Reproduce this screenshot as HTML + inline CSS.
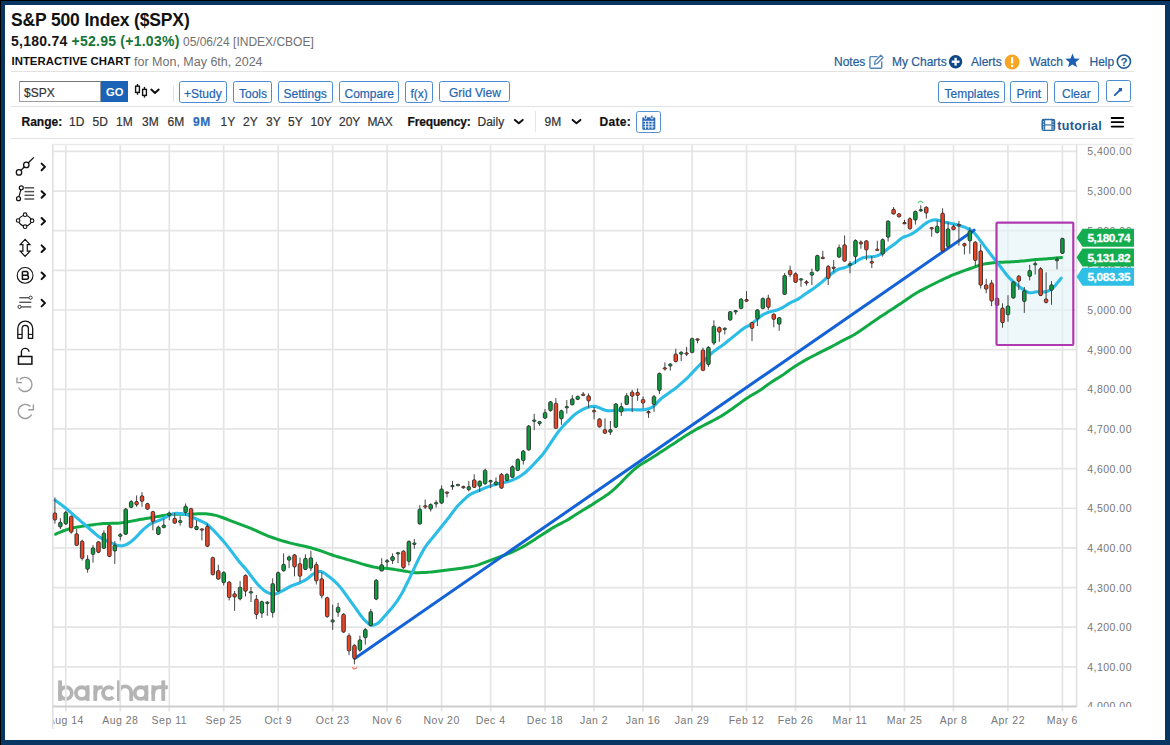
<!DOCTYPE html>
<html><head><meta charset="utf-8">
<style>
*{margin:0;padding:0;box-sizing:border-box}
html,body{width:1170px;height:745px;overflow:hidden;background:#fff}
body{font-family:"Liberation Sans",sans-serif;position:relative}
.a{position:absolute;white-space:nowrap}
.t12,.bt{-webkit-text-stroke:0.2px currentColor}
.t12{font-size:12px;line-height:14px}
.hr{position:absolute;height:1.4px;background:#e2e2e2}
.lnk{color:#1f5c99;top:55px}
.btn{position:absolute;top:81px;height:21.5px;border:1.6px solid #4d8cd4;border-radius:2.5px}
.bt{position:absolute;top:87px;font-size:12px;line-height:14px;color:#1f64b2;white-space:nowrap}
.rng{top:115.3px;color:#333}
.rb{font-weight:bold;color:#111}
.ax{font-family:"Liberation Sans",sans-serif;font-size:10.5px;fill:#777;letter-spacing:0.5px}
.axd{font-family:"Liberation Sans",sans-serif;font-size:10.5px;fill:#777;letter-spacing:0.5px}
.wm{font-family:"Liberation Sans",sans-serif;font-size:27px;font-weight:bold;fill:#b8b8b8;letter-spacing:0.73px}
.tag{font-family:"Liberation Sans",sans-serif;font-size:11.8px;font-weight:bold;fill:#fff;stroke:#fff;stroke-width:0.3px;letter-spacing:-0.4px}
svg.chart{position:absolute;left:0;top:0}
</style></head><body>
<svg class="chart" width="1170" height="745" viewBox="0 0 1170 745">
<rect x="52.8" y="144.6" width="1023.8" height="561.9" fill="#fff"/>
<g fill="#b4b4b4"><rect x="58.1" y="680.4" width="3.9" height="20.5"/><circle cx="65.9" cy="693.1" r="5.85" fill="none" stroke="#b4b4b4" stroke-width="3.8"/><circle cx="81.8" cy="693.1" r="5.85" fill="none" stroke="#b4b4b4" stroke-width="3.8"/><rect x="85.7" y="685.3" width="3.8" height="15.6"/><rect x="93.4" y="685.3" width="3.8" height="15.6"/><path d="M95.3,694 Q95.3,687.2 102.6,687.2" fill="none" stroke="#b4b4b4" stroke-width="3.8"/><path d="M113.2,689.2 A5.85,5.85 0 1 0 113.2,697" fill="none" stroke="#b4b4b4" stroke-width="3.8"/><rect x="117.1" y="680.4" width="3.8" height="20.5"/><path d="M119,700.9 L119,692.5 A6.1,6.1 0 0 1 131.2,692.5 L131.2,700.9" fill="none" stroke="#b4b4b4" stroke-width="3.8"/><circle cx="140.6" cy="693.1" r="5.85" fill="none" stroke="#b4b4b4" stroke-width="3.8"/><rect x="144.5" y="685.3" width="3.8" height="15.6"/><rect x="151.4" y="685.3" width="3.7" height="15.6"/><path d="M153.2,694 Q153.2,687.2 159.9,687.2" fill="none" stroke="#b4b4b4" stroke-width="3.8"/><rect x="161.3" y="680.4" width="3.9" height="20.5"/><rect x="159.6" y="685.3" width="8.2" height="3.9"/></g>
<line x1="52.8" y1="666.85" x2="1076.6" y2="666.85" stroke="#e5e5e5" stroke-width="1.7"/>
<line x1="52.8" y1="627.20" x2="1076.6" y2="627.20" stroke="#e5e5e5" stroke-width="1.7"/>
<line x1="52.8" y1="587.55" x2="1076.6" y2="587.55" stroke="#e5e5e5" stroke-width="1.7"/>
<line x1="52.8" y1="547.90" x2="1076.6" y2="547.90" stroke="#e5e5e5" stroke-width="1.7"/>
<line x1="52.8" y1="508.25" x2="1076.6" y2="508.25" stroke="#e5e5e5" stroke-width="1.7"/>
<line x1="52.8" y1="468.60" x2="1076.6" y2="468.60" stroke="#e5e5e5" stroke-width="1.7"/>
<line x1="52.8" y1="428.95" x2="1076.6" y2="428.95" stroke="#e5e5e5" stroke-width="1.7"/>
<line x1="52.8" y1="389.30" x2="1076.6" y2="389.30" stroke="#e5e5e5" stroke-width="1.7"/>
<line x1="52.8" y1="349.65" x2="1076.6" y2="349.65" stroke="#e5e5e5" stroke-width="1.7"/>
<line x1="52.8" y1="310.00" x2="1076.6" y2="310.00" stroke="#e5e5e5" stroke-width="1.7"/>
<line x1="52.8" y1="270.35" x2="1076.6" y2="270.35" stroke="#e5e5e5" stroke-width="1.7"/>
<line x1="52.8" y1="230.70" x2="1076.6" y2="230.70" stroke="#e5e5e5" stroke-width="1.7"/>
<line x1="52.8" y1="191.05" x2="1076.6" y2="191.05" stroke="#e5e5e5" stroke-width="1.7"/>
<line x1="52.8" y1="151.40" x2="1076.6" y2="151.40" stroke="#e5e5e5" stroke-width="1.7"/>
<line x1="65.80" y1="144.6" x2="65.80" y2="711.5" stroke="#e5e5e5" stroke-width="1.7"/>
<line x1="120.26" y1="144.6" x2="120.26" y2="711.5" stroke="#e5e5e5" stroke-width="1.7"/>
<line x1="169.27" y1="144.6" x2="169.27" y2="711.5" stroke="#e5e5e5" stroke-width="1.7"/>
<line x1="223.73" y1="144.6" x2="223.73" y2="711.5" stroke="#e5e5e5" stroke-width="1.7"/>
<line x1="278.19" y1="144.6" x2="278.19" y2="711.5" stroke="#e5e5e5" stroke-width="1.7"/>
<line x1="332.65" y1="144.6" x2="332.65" y2="711.5" stroke="#e5e5e5" stroke-width="1.7"/>
<line x1="387.11" y1="144.6" x2="387.11" y2="711.5" stroke="#e5e5e5" stroke-width="1.7"/>
<line x1="441.57" y1="144.6" x2="441.57" y2="711.5" stroke="#e5e5e5" stroke-width="1.7"/>
<line x1="490.59" y1="144.6" x2="490.59" y2="711.5" stroke="#e5e5e5" stroke-width="1.7"/>
<line x1="545.05" y1="144.6" x2="545.05" y2="711.5" stroke="#e5e5e5" stroke-width="1.7"/>
<line x1="594.06" y1="144.6" x2="594.06" y2="711.5" stroke="#e5e5e5" stroke-width="1.7"/>
<line x1="643.08" y1="144.6" x2="643.08" y2="711.5" stroke="#e5e5e5" stroke-width="1.7"/>
<line x1="692.09" y1="144.6" x2="692.09" y2="711.5" stroke="#e5e5e5" stroke-width="1.7"/>
<line x1="746.55" y1="144.6" x2="746.55" y2="711.5" stroke="#e5e5e5" stroke-width="1.7"/>
<line x1="795.56" y1="144.6" x2="795.56" y2="711.5" stroke="#e5e5e5" stroke-width="1.7"/>
<line x1="850.02" y1="144.6" x2="850.02" y2="711.5" stroke="#e5e5e5" stroke-width="1.7"/>
<line x1="904.48" y1="144.6" x2="904.48" y2="711.5" stroke="#e5e5e5" stroke-width="1.7"/>
<line x1="953.50" y1="144.6" x2="953.50" y2="711.5" stroke="#e5e5e5" stroke-width="1.7"/>
<line x1="1007.96" y1="144.6" x2="1007.96" y2="711.5" stroke="#e5e5e5" stroke-width="1.7"/>
<line x1="1062.42" y1="144.6" x2="1062.42" y2="711.5" stroke="#e5e5e5" stroke-width="1.7"/>
<line x1="52.8" y1="144.6" x2="1133" y2="144.6" stroke="#ebebeb" stroke-width="1.5"/>
<line x1="52.8" y1="144.6" x2="52.8" y2="729" stroke="#e0e0e0" stroke-width="1.6"/>
<line x1="1076.6" y1="144.6" x2="1076.6" y2="706.5" stroke="#e0e0e0" stroke-width="1.6"/>
<line x1="52.8" y1="706.5" x2="1076.6" y2="706.5" stroke="#cecece" stroke-width="1.8"/>
<clipPath id="yclip"><rect x="1077" y="140" width="90" height="567"/></clipPath><g clip-path="url(#yclip)">
<text x="1132" y="710.4" text-anchor="end" class="ax">4,000.00</text>
<text x="1132" y="670.8" text-anchor="end" class="ax">4,100.00</text>
<text x="1132" y="631.1" text-anchor="end" class="ax">4,200.00</text>
<text x="1132" y="591.5" text-anchor="end" class="ax">4,300.00</text>
<text x="1132" y="551.8" text-anchor="end" class="ax">4,400.00</text>
<text x="1132" y="512.1" text-anchor="end" class="ax">4,500.00</text>
<text x="1132" y="472.5" text-anchor="end" class="ax">4,600.00</text>
<text x="1132" y="432.9" text-anchor="end" class="ax">4,700.00</text>
<text x="1132" y="393.2" text-anchor="end" class="ax">4,800.00</text>
<text x="1132" y="353.5" text-anchor="end" class="ax">4,900.00</text>
<text x="1132" y="313.9" text-anchor="end" class="ax">5,000.00</text>
<text x="1132" y="274.2" text-anchor="end" class="ax">5,100.00</text>
<text x="1132" y="234.6" text-anchor="end" class="ax">5,200.00</text>
<text x="1132" y="195.0" text-anchor="end" class="ax">5,300.00</text>
<text x="1132" y="155.3" text-anchor="end" class="ax">5,400.00</text>
</g>
<clipPath id="dclip"><rect x="53.6" y="706" width="1100" height="30"/></clipPath><g clip-path="url(#dclip)">
<text x="65.8" y="724" text-anchor="middle" class="axd">Aug 14</text>
<text x="120.3" y="724" text-anchor="middle" class="axd">Aug 28</text>
<text x="169.3" y="724" text-anchor="middle" class="axd">Sep 11</text>
<text x="223.7" y="724" text-anchor="middle" class="axd">Sep 25</text>
<text x="278.2" y="724" text-anchor="middle" class="axd">Oct 9</text>
<text x="332.7" y="724" text-anchor="middle" class="axd">Oct 23</text>
<text x="387.1" y="724" text-anchor="middle" class="axd">Nov 6</text>
<text x="441.6" y="724" text-anchor="middle" class="axd">Nov 20</text>
<text x="490.6" y="724" text-anchor="middle" class="axd">Dec 4</text>
<text x="545.0" y="724" text-anchor="middle" class="axd">Dec 18</text>
<text x="594.1" y="724" text-anchor="middle" class="axd">Jan 2</text>
<text x="643.1" y="724" text-anchor="middle" class="axd">Jan 16</text>
<text x="692.1" y="724" text-anchor="middle" class="axd">Jan 29</text>
<text x="746.5" y="724" text-anchor="middle" class="axd">Feb 12</text>
<text x="795.6" y="724" text-anchor="middle" class="axd">Feb 26</text>
<text x="850.0" y="724" text-anchor="middle" class="axd">Mar 11</text>
<text x="904.5" y="724" text-anchor="middle" class="axd">Mar 25</text>
<text x="953.5" y="724" text-anchor="middle" class="axd">Apr 8</text>
<text x="1008.0" y="724" text-anchor="middle" class="axd">Apr 22</text>
<text x="1062.4" y="724" text-anchor="middle" class="axd">May 6</text>
</g>
<rect x="996.5" y="222.6" width="76.8" height="122.4" fill="#e3f3f8" fill-opacity="0.62" rx="1"/>
<path d="M55.6,534.20 L57.6,533.12 L59.6,532.38 L61.6,531.56 L63.6,530.77 L65.6,530.04 L67.6,529.39 L69.6,528.78 L71.6,528.23 L73.6,527.75 L75.6,527.35 L77.6,527.00 L79.6,526.69 L81.6,526.39 L83.6,526.10 L85.6,525.80 L87.6,525.50 L89.6,525.21 L91.6,524.92 L93.6,524.65 L95.6,524.38 L97.6,524.13 L99.6,523.91 L101.6,523.73 L103.6,523.61 L105.6,523.53 L107.6,523.47 L109.6,523.43 L111.6,523.37 L113.6,523.32 L115.6,523.25 L117.6,523.15 L119.6,523.02 L121.6,522.81 L123.6,522.54 L125.6,522.22 L127.6,521.88 L129.6,521.52 L131.6,521.14 L133.6,520.75 L135.6,520.35 L137.6,519.96 L139.6,519.59 L141.6,519.24 L143.6,518.90 L145.6,518.56 L147.6,518.23 L149.6,517.90 L151.6,517.57 L153.6,517.23 L155.6,516.88 L157.6,516.52 L159.6,516.15 L161.6,515.78 L163.6,515.44 L165.6,515.14 L167.6,514.88 L169.6,514.67 L171.6,514.48 L173.6,514.33 L175.6,514.24 L177.6,514.22 L179.6,514.24 L181.6,514.28 L183.6,514.31 L185.6,514.30 L187.6,514.26 L189.6,514.18 L191.6,514.09 L193.6,514.00 L195.6,513.91 L197.6,513.84 L199.6,513.78 L201.6,513.74 L203.6,513.74 L205.6,513.82 L207.6,513.99 L209.6,514.24 L211.6,514.55 L213.6,514.91 L215.6,515.37 L217.6,515.93 L219.6,516.58 L221.6,517.28 L223.6,518.00 L225.6,518.75 L227.6,519.52 L229.6,520.30 L231.6,521.10 L233.6,521.89 L235.6,522.66 L237.6,523.41 L239.6,524.15 L241.6,524.88 L243.6,525.61 L245.6,526.35 L247.6,527.09 L249.6,527.87 L251.6,528.69 L253.6,529.56 L255.6,530.46 L257.6,531.37 L259.6,532.29 L261.6,533.20 L263.6,534.10 L265.6,534.97 L267.6,535.78 L269.6,536.54 L271.6,537.26 L273.6,537.97 L275.6,538.66 L277.6,539.34 L279.6,539.99 L281.6,540.61 L283.6,541.20 L285.6,541.76 L287.6,542.31 L289.6,542.86 L291.6,543.39 L293.6,543.89 L295.6,544.35 L297.6,544.78 L299.6,545.19 L301.6,545.60 L303.6,546.01 L305.6,546.46 L307.6,546.94 L309.6,547.48 L311.6,548.05 L313.6,548.64 L315.6,549.24 L317.6,549.85 L319.6,550.49 L321.6,551.16 L323.6,551.87 L325.6,552.59 L327.6,553.33 L329.6,554.06 L331.6,554.78 L333.6,555.47 L335.6,556.11 L337.6,556.71 L339.6,557.29 L341.6,557.86 L343.6,558.43 L345.6,559.00 L347.6,559.57 L349.6,560.14 L351.6,560.73 L353.6,561.33 L355.6,561.94 L357.6,562.57 L359.6,563.19 L361.6,563.81 L363.6,564.40 L365.6,564.96 L367.6,565.49 L369.6,565.99 L371.6,566.47 L373.6,566.94 L375.6,567.35 L377.6,567.67 L379.6,567.91 L381.6,568.08 L383.6,568.23 L385.6,568.37 L387.6,568.53 L389.6,568.74 L391.6,568.99 L393.6,569.29 L395.6,569.61 L397.6,569.93 L399.6,570.26 L401.6,570.60 L403.6,570.94 L405.6,571.29 L407.6,571.64 L409.6,571.99 L411.6,572.29 L413.6,572.52 L415.6,572.64 L417.6,572.68 L419.6,572.66 L421.6,572.61 L423.6,572.54 L425.6,572.45 L427.6,572.31 L429.6,572.13 L431.6,571.93 L433.6,571.72 L435.6,571.50 L437.6,571.28 L439.6,571.05 L441.6,570.81 L443.6,570.55 L445.6,570.29 L447.6,570.02 L449.6,569.75 L451.6,569.49 L453.6,569.23 L455.6,568.97 L457.6,568.72 L459.6,568.46 L461.6,568.19 L463.6,567.90 L465.6,567.59 L467.6,567.26 L469.6,566.91 L471.6,566.54 L473.6,566.12 L475.6,565.63 L477.6,565.07 L479.6,564.42 L481.6,563.71 L483.6,562.96 L485.6,562.18 L487.6,561.40 L489.6,560.62 L491.6,559.87 L493.6,559.14 L495.6,558.42 L497.6,557.71 L499.6,557.00 L501.6,556.27 L503.6,555.52 L505.6,554.74 L507.6,553.95 L509.6,553.15 L511.6,552.32 L513.6,551.44 L515.6,550.50 L517.6,549.52 L519.6,548.51 L521.6,547.47 L523.6,546.39 L525.6,545.23 L527.6,544.01 L529.6,542.75 L531.6,541.47 L533.6,540.18 L535.6,538.89 L537.6,537.60 L539.6,536.30 L541.6,535.01 L543.6,533.71 L545.6,532.42 L547.6,531.13 L549.6,529.86 L551.6,528.60 L553.6,527.38 L555.6,526.22 L557.6,525.13 L559.6,524.09 L561.6,523.07 L563.6,522.04 L565.6,520.97 L567.6,519.84 L569.6,518.64 L571.6,517.39 L573.6,516.11 L575.6,514.83 L577.6,513.55 L579.6,512.29 L581.6,511.05 L583.6,509.83 L585.6,508.61 L587.6,507.38 L589.6,506.15 L591.6,504.91 L593.6,503.64 L595.6,502.36 L597.6,501.07 L599.6,499.78 L601.6,498.49 L603.6,497.19 L605.6,495.87 L607.6,494.50 L609.6,493.04 L611.6,491.44 L613.6,489.70 L615.6,487.86 L617.6,485.93 L619.6,483.94 L621.6,481.88 L623.6,479.78 L625.6,477.70 L627.6,475.67 L629.6,473.71 L631.6,471.82 L633.6,470.00 L635.6,468.28 L637.6,466.71 L639.6,465.32 L641.6,464.05 L643.6,462.84 L645.6,461.64 L647.6,460.43 L649.6,459.20 L651.6,457.97 L653.6,456.72 L655.6,455.45 L657.6,454.16 L659.6,452.86 L661.6,451.54 L663.6,450.22 L665.6,448.91 L667.6,447.60 L669.6,446.30 L671.6,445.00 L673.6,443.69 L675.6,442.38 L677.6,441.05 L679.6,439.72 L681.6,438.38 L683.6,437.06 L685.6,435.76 L687.6,434.50 L689.6,433.28 L691.6,432.10 L693.6,430.94 L695.6,429.79 L697.6,428.66 L699.6,427.57 L701.6,426.50 L703.6,425.47 L705.6,424.45 L707.6,423.42 L709.6,422.39 L711.6,421.34 L713.6,420.28 L715.6,419.20 L717.6,418.10 L719.6,416.99 L721.6,415.85 L723.6,414.63 L725.6,413.33 L727.6,411.97 L729.6,410.57 L731.6,409.16 L733.6,407.74 L735.6,406.31 L737.6,404.85 L739.6,403.37 L741.6,401.89 L743.6,400.42 L745.6,399.00 L747.6,397.65 L749.6,396.41 L751.6,395.25 L753.6,394.12 L755.6,392.99 L757.6,391.83 L759.6,390.57 L761.6,389.21 L763.6,387.77 L765.6,386.29 L767.6,384.80 L769.6,383.34 L771.6,381.94 L773.6,380.63 L775.6,379.38 L777.6,378.16 L779.6,376.95 L781.6,375.70 L783.6,374.39 L785.6,373.00 L787.6,371.55 L789.6,370.08 L791.6,368.63 L793.6,367.24 L795.6,365.94 L797.6,364.70 L799.6,363.49 L801.6,362.30 L803.6,361.11 L805.6,359.95 L807.6,358.84 L809.6,357.77 L811.6,356.74 L813.6,355.72 L815.6,354.72 L817.6,353.71 L819.6,352.70 L821.6,351.70 L823.6,350.70 L825.6,349.70 L827.6,348.69 L829.6,347.67 L831.6,346.63 L833.6,345.55 L835.6,344.46 L837.6,343.36 L839.6,342.26 L841.6,341.17 L843.6,340.11 L845.6,339.08 L847.6,338.07 L849.6,337.07 L851.6,336.06 L853.6,334.99 L855.6,333.84 L857.6,332.58 L859.6,331.23 L861.6,329.84 L863.6,328.44 L865.6,327.04 L867.6,325.64 L869.6,324.25 L871.6,322.85 L873.6,321.47 L875.6,320.08 L877.6,318.71 L879.6,317.35 L881.6,316.01 L883.6,314.69 L885.6,313.38 L887.6,312.08 L889.6,310.77 L891.6,309.47 L893.6,308.17 L895.6,306.87 L897.6,305.56 L899.6,304.26 L901.6,302.94 L903.6,301.61 L905.6,300.24 L907.6,298.85 L909.6,297.46 L911.6,296.07 L913.6,294.72 L915.6,293.44 L917.6,292.26 L919.6,291.16 L921.6,290.11 L923.6,289.08 L925.6,288.05 L927.6,287.03 L929.6,286.01 L931.6,285.00 L933.6,284.00 L935.6,283.00 L937.6,282.00 L939.6,281.02 L941.6,280.05 L943.6,279.11 L945.6,278.19 L947.6,277.28 L949.6,276.38 L951.6,275.49 L953.6,274.62 L955.6,273.80 L957.6,273.03 L959.6,272.30 L961.6,271.59 L963.6,270.89 L965.6,270.18 L967.6,269.47 L969.6,268.76 L971.6,268.04 L973.6,267.31 L975.6,266.58 L977.6,265.86 L979.6,265.19 L981.6,264.60 L983.6,264.14 L985.6,263.77 L987.6,263.47 L989.6,263.20 L991.6,262.94 L993.6,262.70 L995.6,262.51 L997.6,262.38 L999.6,262.29 L1001.6,262.22 L1003.6,262.16 L1005.6,262.09 L1007.6,262.02 L1009.6,261.93 L1011.6,261.81 L1013.6,261.69 L1015.6,261.56 L1017.6,261.42 L1019.6,261.27 L1021.6,261.11 L1023.6,260.92 L1025.6,260.71 L1027.6,260.48 L1029.6,260.24 L1031.6,260.01 L1033.6,259.79 L1035.6,259.59 L1037.6,259.42 L1039.6,259.28 L1041.6,259.16 L1043.6,259.03 L1045.6,258.91 L1047.6,258.77 L1049.6,258.62 L1051.6,258.44 L1053.6,258.25 L1055.6,258.05 L1057.6,257.86 L1059.6,257.69 L1061.6,257.44" fill="none" stroke="#10a944" stroke-width="3.0" stroke-linejoin="round" stroke-linecap="round"/>
<path d="M55.2,500.30 L57.2,501.80 L59.2,503.14 L61.2,504.61 L63.2,506.16 L65.2,507.78 L67.2,509.42 L69.2,511.09 L71.2,512.82 L73.2,514.57 L75.2,516.33 L77.2,518.07 L79.2,519.81 L81.2,521.55 L83.2,523.28 L85.2,525.02 L87.2,526.75 L89.2,528.49 L91.2,530.23 L93.2,531.99 L95.2,533.73 L97.2,535.42 L99.2,536.91 L101.2,538.12 L103.2,539.17 L105.2,540.16 L107.2,541.10 L109.2,541.99 L111.2,542.84 L113.2,543.67 L115.2,544.45 L117.2,545.16 L119.2,545.71 L121.2,545.86 L123.2,545.56 L125.2,544.97 L127.2,544.11 L129.2,542.88 L131.2,541.42 L133.2,539.83 L135.2,538.01 L137.2,535.92 L139.2,533.71 L141.2,531.57 L143.2,529.64 L145.2,527.91 L147.2,526.29 L149.2,524.75 L151.2,523.46 L153.2,522.53 L155.2,521.81 L157.2,521.10 L159.2,520.31 L161.2,519.46 L163.2,518.52 L165.2,517.44 L167.2,516.31 L169.2,515.29 L171.2,514.47 L173.2,513.82 L175.2,513.40 L177.2,513.32 L179.2,513.44 L181.2,513.65 L183.2,513.93 L185.2,514.29 L187.2,514.83 L189.2,515.64 L191.2,516.61 L193.2,517.58 L195.2,518.49 L197.2,519.35 L199.2,520.22 L201.2,521.14 L203.2,522.11 L205.2,523.16 L207.2,524.43 L209.2,526.09 L211.2,528.01 L213.2,530.01 L215.2,532.07 L217.2,534.21 L219.2,536.42 L221.2,538.65 L223.2,540.95 L225.2,543.36 L227.2,545.85 L229.2,548.38 L231.2,550.96 L233.2,553.62 L235.2,556.33 L237.2,559.04 L239.2,561.63 L241.2,563.97 L243.2,566.15 L245.2,568.33 L247.2,570.71 L249.2,573.34 L251.2,576.09 L253.2,578.78 L255.2,581.31 L257.2,583.70 L259.2,585.95 L261.2,587.93 L263.2,589.66 L265.2,591.17 L267.2,592.36 L269.2,593.13 L271.2,593.66 L273.2,594.02 L275.2,593.98 L277.2,593.38 L279.2,592.47 L281.2,591.47 L283.2,590.42 L285.2,589.30 L287.2,588.14 L289.2,587.00 L291.2,585.99 L293.2,585.15 L295.2,584.43 L297.2,583.71 L299.2,582.96 L301.2,582.12 L303.2,581.16 L305.2,580.10 L307.2,578.84 L309.2,577.28 L311.2,575.57 L313.2,574.01 L315.2,572.79 L317.2,571.91 L319.2,571.40 L321.2,571.56 L323.2,572.49 L325.2,573.81 L327.2,575.26 L329.2,576.77 L331.2,578.34 L333.2,579.99 L335.2,581.81 L337.2,583.79 L339.2,585.96 L341.2,588.38 L343.2,591.03 L345.2,593.76 L347.2,596.53 L349.2,599.31 L351.2,602.11 L353.2,604.91 L355.2,607.72 L357.2,610.52 L359.2,613.32 L361.2,616.06 L363.2,618.58 L365.2,620.74 L367.2,622.65 L369.2,624.30 L371.2,625.26 L373.2,625.22 L375.2,624.59 L377.2,623.65 L379.2,622.21 L381.2,620.18 L383.2,617.85 L385.2,615.47 L387.2,613.15 L389.2,610.90 L391.2,608.66 L393.2,606.29 L395.2,603.67 L397.2,600.80 L399.2,597.78 L401.2,594.55 L403.2,590.94 L405.2,587.03 L407.2,583.01 L409.2,578.90 L411.2,574.67 L413.2,570.37 L415.2,566.07 L417.2,561.89 L419.2,557.92 L421.2,554.08 L423.2,550.40 L425.2,547.08 L427.2,544.30 L429.2,541.81 L431.2,539.38 L433.2,536.93 L435.2,534.46 L437.2,531.98 L439.2,529.49 L441.2,527.00 L443.2,524.51 L445.2,522.01 L447.2,519.50 L449.2,516.94 L451.2,514.31 L453.2,511.64 L455.2,508.99 L457.2,506.50 L459.2,504.30 L461.2,502.32 L463.2,500.43 L465.2,498.55 L467.2,496.72 L469.2,495.12 L471.2,493.91 L473.2,492.98 L475.2,492.13 L477.2,491.29 L479.2,490.45 L481.2,489.60 L483.2,488.75 L485.2,487.90 L487.2,487.08 L489.2,486.34 L491.2,485.71 L493.2,485.13 L495.2,484.57 L497.2,484.02 L499.2,483.50 L501.2,483.04 L503.2,482.61 L505.2,482.19 L507.2,481.74 L509.2,481.20 L511.2,480.50 L513.2,479.70 L515.2,478.84 L517.2,477.90 L519.2,476.78 L521.2,475.47 L523.2,474.05 L525.2,472.50 L527.2,470.73 L529.2,468.79 L531.2,466.79 L533.2,464.77 L535.2,462.69 L537.2,460.55 L539.2,458.37 L541.2,456.14 L543.2,453.74 L545.2,451.02 L547.2,448.11 L549.2,445.15 L551.2,442.17 L553.2,439.18 L555.2,436.20 L557.2,433.30 L559.2,430.65 L561.2,428.28 L563.2,426.07 L565.2,423.90 L567.2,421.79 L569.2,419.79 L571.2,417.85 L573.2,415.95 L575.2,414.21 L577.2,412.74 L579.2,411.48 L581.2,410.30 L583.2,409.22 L585.2,408.32 L587.2,407.60 L589.2,406.99 L591.2,406.51 L593.2,406.34 L595.2,406.57 L597.2,407.05 L599.2,407.71 L601.2,408.60 L603.2,409.57 L605.2,410.29 L607.2,410.62 L609.2,410.71 L611.2,410.70 L613.2,410.57 L615.2,410.37 L617.2,410.17 L619.2,410.03 L621.2,409.94 L623.2,409.89 L625.2,409.85 L627.2,409.81 L629.2,409.80 L631.2,409.80 L633.2,409.80 L635.2,409.81 L637.2,409.85 L639.2,409.89 L641.2,409.91 L643.2,409.82 L645.2,409.52 L647.2,409.03 L649.2,408.44 L651.2,407.75 L653.2,406.66 L655.2,404.89 L657.2,402.68 L659.2,400.50 L661.2,398.62 L663.2,397.06 L665.2,395.62 L667.2,394.21 L669.2,392.79 L671.2,391.36 L673.2,389.93 L675.2,388.45 L677.2,386.86 L679.2,385.18 L681.2,383.45 L683.2,381.70 L685.2,379.93 L687.2,378.05 L689.2,376.01 L691.2,373.89 L693.2,371.74 L695.2,369.62 L697.2,367.54 L699.2,365.51 L701.2,363.50 L703.2,361.50 L705.2,359.50 L707.2,357.50 L709.2,355.52 L711.2,353.60 L713.2,351.88 L715.2,350.36 L717.2,348.95 L719.2,347.57 L721.2,346.17 L723.2,344.72 L725.2,343.17 L727.2,341.58 L729.2,339.97 L731.2,338.35 L733.2,336.74 L735.2,335.12 L737.2,333.50 L739.2,331.87 L741.2,330.26 L743.2,328.72 L745.2,327.40 L747.2,326.32 L749.2,325.27 L751.2,324.01 L753.2,322.51 L755.2,320.90 L757.2,319.21 L759.2,317.50 L761.2,315.91 L763.2,314.63 L765.2,313.64 L767.2,312.80 L769.2,312.08 L771.2,311.51 L773.2,311.03 L775.2,310.56 L777.2,309.98 L779.2,309.21 L781.2,308.27 L783.2,307.20 L785.2,305.98 L787.2,304.67 L789.2,303.42 L791.2,302.33 L793.2,301.40 L795.2,300.51 L797.2,299.54 L799.2,298.37 L801.2,296.99 L803.2,295.52 L805.2,294.07 L807.2,292.70 L809.2,291.39 L811.2,290.09 L813.2,288.75 L815.2,287.32 L817.2,285.81 L819.2,284.25 L821.2,282.66 L823.2,280.97 L825.2,279.18 L827.2,277.35 L829.2,275.59 L831.2,274.00 L833.2,272.54 L835.2,271.15 L837.2,269.92 L839.2,269.00 L841.2,268.39 L843.2,267.91 L845.2,267.39 L847.2,266.65 L849.2,265.66 L851.2,264.52 L853.2,263.34 L855.2,262.08 L857.2,260.77 L859.2,259.53 L861.2,258.52 L863.2,257.72 L865.2,257.17 L867.2,256.94 L869.2,256.88 L871.2,256.80 L873.2,256.64 L875.2,256.34 L877.2,255.77 L879.2,254.92 L881.2,253.82 L883.2,252.47 L885.2,250.91 L887.2,249.32 L889.2,247.83 L891.2,246.41 L893.2,244.99 L895.2,243.48 L897.2,241.83 L899.2,240.12 L901.2,238.53 L903.2,237.30 L905.2,236.50 L907.2,235.87 L909.2,235.13 L911.2,234.20 L913.2,233.09 L915.2,231.74 L917.2,230.20 L919.2,228.59 L921.2,226.96 L923.2,225.32 L925.2,223.74 L927.2,222.38 L929.2,221.37 L931.2,220.60 L933.2,220.02 L935.2,219.83 L937.2,220.09 L939.2,220.60 L941.2,221.16 L943.2,221.70 L945.2,222.19 L947.2,222.62 L949.2,223.01 L951.2,223.40 L953.2,223.81 L955.2,224.26 L957.2,224.80 L959.2,225.40 L961.2,226.02 L963.2,226.66 L965.2,227.39 L967.2,228.30 L969.2,229.38 L971.2,230.57 L973.2,232.03 L975.2,233.99 L977.2,236.43 L979.2,239.09 L981.2,241.77 L983.2,244.44 L985.2,247.09 L987.2,249.73 L989.2,252.35 L991.2,254.94 L993.2,257.48 L995.2,260.02 L997.2,262.56 L999.2,265.12 L1001.2,267.72 L1003.2,270.33 L1005.2,272.93 L1007.2,275.47 L1009.2,277.78 L1011.2,279.76 L1013.2,281.55 L1015.2,283.29 L1017.2,285.01 L1019.2,286.64 L1021.2,288.11 L1023.2,289.46 L1025.2,290.76 L1027.2,291.93 L1029.2,292.68 L1031.2,292.75 L1033.2,292.42 L1035.2,292.02 L1037.2,291.69 L1039.2,291.56 L1041.2,291.66 L1043.2,291.85 L1045.2,291.88 L1047.2,291.45 L1049.2,290.48 L1051.2,289.18 L1053.2,287.56 L1055.2,285.47 L1057.2,283.11 L1059.2,280.80 L1061.2,278.18" fill="none" stroke="#2cbde7" stroke-width="3.1" stroke-linejoin="round" stroke-linecap="round"/>
<line x1="354.7" y1="658.4" x2="974.1" y2="230.2" stroke="#1462d8" stroke-width="3.0" stroke-linecap="round"/>
<line x1="54.9" y1="497.4" x2="54.9" y2="523.6" stroke="#454545" stroke-width="1"/>
<rect x="53.16" y="512.9" width="3.5" height="7.1" rx="1.2" fill="#ec4424" stroke="#2a2a2a" stroke-width="0.9"/>
<line x1="60.4" y1="518.3" x2="60.4" y2="529.0" stroke="#454545" stroke-width="1"/>
<rect x="58.60" y="522.3" width="3.5" height="4.7" rx="1.2" fill="#0b9e3e" stroke="#2a2a2a" stroke-width="0.9"/>
<line x1="65.8" y1="510.9" x2="65.8" y2="525.0" stroke="#454545" stroke-width="1"/>
<rect x="64.05" y="512.2" width="3.5" height="11.8" rx="1.2" fill="#0b9e3e" stroke="#2a2a2a" stroke-width="0.9"/>
<line x1="71.2" y1="515.6" x2="71.2" y2="533.7" stroke="#454545" stroke-width="1"/>
<rect x="69.50" y="516.2" width="3.5" height="16.1" rx="1.2" fill="#ec4424" stroke="#2a2a2a" stroke-width="0.9"/>
<line x1="76.7" y1="529.0" x2="76.7" y2="545.8" stroke="#454545" stroke-width="1"/>
<rect x="74.94" y="533.7" width="3.5" height="11.8" rx="1.2" fill="#ec4424" stroke="#2a2a2a" stroke-width="0.9"/>
<line x1="82.1" y1="539.7" x2="82.1" y2="560.5" stroke="#454545" stroke-width="1"/>
<rect x="80.39" y="541.1" width="3.5" height="17.4" rx="1.2" fill="#ec4424" stroke="#2a2a2a" stroke-width="0.9"/>
<line x1="87.6" y1="555.2" x2="87.6" y2="572.6" stroke="#454545" stroke-width="1"/>
<rect x="85.83" y="559.2" width="3.5" height="10.1" rx="1.2" fill="#0b9e3e" stroke="#2a2a2a" stroke-width="0.9"/>
<line x1="93.0" y1="545.1" x2="93.0" y2="562.6" stroke="#454545" stroke-width="1"/>
<rect x="91.28" y="547.8" width="3.5" height="6.7" rx="1.2" fill="#0b9e3e" stroke="#2a2a2a" stroke-width="0.9"/>
<line x1="98.5" y1="541.1" x2="98.5" y2="553.2" stroke="#454545" stroke-width="1"/>
<rect x="96.73" y="541.7" width="3.5" height="10.7" rx="1.2" fill="#ec4424" stroke="#2a2a2a" stroke-width="0.9"/>
<line x1="103.9" y1="530.3" x2="103.9" y2="549.1" stroke="#454545" stroke-width="1"/>
<rect x="102.17" y="533.0" width="3.5" height="15.4" rx="1.2" fill="#0b9e3e" stroke="#2a2a2a" stroke-width="0.9"/>
<line x1="109.4" y1="525.0" x2="109.4" y2="557.2" stroke="#454545" stroke-width="1"/>
<rect x="107.62" y="525.6" width="3.5" height="30.9" rx="1.2" fill="#ec4424" stroke="#2a2a2a" stroke-width="0.9"/>
<line x1="114.8" y1="541.1" x2="114.8" y2="563.9" stroke="#454545" stroke-width="1"/>
<rect x="113.06" y="545.1" width="3.5" height="6.0" rx="1.2" fill="#0b9e3e" stroke="#2a2a2a" stroke-width="0.9"/>
<line x1="120.3" y1="533.0" x2="120.3" y2="540.4" stroke="#454545" stroke-width="1"/>
<rect x="118.51" y="534.4" width="3.5" height="2.0" rx="1.2" fill="#0b9e3e" stroke="#2a2a2a" stroke-width="0.9"/>
<line x1="125.7" y1="508.2" x2="125.7" y2="535.0" stroke="#454545" stroke-width="1"/>
<rect x="123.96" y="508.9" width="3.5" height="25.5" rx="1.2" fill="#0b9e3e" stroke="#2a2a2a" stroke-width="0.9"/>
<line x1="131.2" y1="500.1" x2="131.2" y2="508.2" stroke="#454545" stroke-width="1"/>
<rect x="129.40" y="501.5" width="3.5" height="6.0" rx="1.2" fill="#0b9e3e" stroke="#2a2a2a" stroke-width="0.9"/>
<line x1="136.6" y1="495.4" x2="136.6" y2="506.8" stroke="#454545" stroke-width="1"/>
<rect x="134.85" y="501.5" width="3.5" height="3.4" rx="1.2" fill="#ec4424" stroke="#2a2a2a" stroke-width="0.9"/>
<line x1="142.0" y1="492.1" x2="142.0" y2="506.8" stroke="#454545" stroke-width="1"/>
<rect x="140.29" y="495.8" width="3.5" height="5.6" rx="1.2" fill="#ec4424" stroke="#2a2a2a" stroke-width="0.9"/>
<line x1="147.5" y1="502.8" x2="147.5" y2="509.5" stroke="#454545" stroke-width="1"/>
<rect x="145.74" y="503.5" width="3.5" height="5.8" rx="1.2" fill="#ec4424" stroke="#2a2a2a" stroke-width="0.9"/>
<line x1="152.9" y1="510.9" x2="152.9" y2="530.3" stroke="#454545" stroke-width="1"/>
<rect x="151.19" y="511.5" width="3.5" height="10.1" rx="1.2" fill="#ec4424" stroke="#2a2a2a" stroke-width="0.9"/>
<line x1="158.4" y1="525.6" x2="158.4" y2="535.0" stroke="#454545" stroke-width="1"/>
<rect x="156.63" y="527.0" width="3.5" height="7.4" rx="1.2" fill="#0b9e3e" stroke="#2a2a2a" stroke-width="0.9"/>
<line x1="163.8" y1="518.9" x2="163.8" y2="528.1" stroke="#454545" stroke-width="1"/>
<rect x="162.08" y="525.0" width="3.5" height="2.7" rx="1.2" fill="#0b9e3e" stroke="#2a2a2a" stroke-width="0.9"/>
<line x1="169.3" y1="511.5" x2="169.3" y2="520.3" stroke="#454545" stroke-width="1"/>
<rect x="167.52" y="512.9" width="3.5" height="2.7" rx="1.2" fill="#0b9e3e" stroke="#2a2a2a" stroke-width="0.9"/>
<line x1="174.7" y1="512.9" x2="174.7" y2="523.6" stroke="#454545" stroke-width="1"/>
<rect x="172.97" y="518.3" width="3.5" height="5.0" rx="1.2" fill="#ec4424" stroke="#2a2a2a" stroke-width="0.9"/>
<line x1="180.2" y1="516.2" x2="180.2" y2="525.6" stroke="#454545" stroke-width="1"/>
<rect x="178.42" y="520.5" width="3.5" height="2.1" rx="1.2" fill="#0b9e3e" stroke="#2a2a2a" stroke-width="0.9"/>
<line x1="185.6" y1="503.5" x2="185.6" y2="515.6" stroke="#454545" stroke-width="1"/>
<rect x="183.86" y="506.2" width="3.5" height="6.3" rx="1.2" fill="#0b9e3e" stroke="#2a2a2a" stroke-width="0.9"/>
<line x1="191.1" y1="507.9" x2="191.1" y2="528.1" stroke="#454545" stroke-width="1"/>
<rect x="189.31" y="508.5" width="3.5" height="19.2" rx="1.2" fill="#ec4424" stroke="#2a2a2a" stroke-width="0.9"/>
<line x1="196.5" y1="520.3" x2="196.5" y2="529.9" stroke="#454545" stroke-width="1"/>
<rect x="194.75" y="526.3" width="3.5" height="3.4" rx="1.2" fill="#0b9e3e" stroke="#2a2a2a" stroke-width="0.9"/>
<line x1="201.9" y1="528.3" x2="201.9" y2="540.4" stroke="#454545" stroke-width="1"/>
<rect x="200.20" y="528.8" width="3.5" height="1.5" rx="1.2" fill="#ec4424" stroke="#2a2a2a" stroke-width="0.9"/>
<line x1="207.4" y1="523.6" x2="207.4" y2="547.1" stroke="#454545" stroke-width="1"/>
<rect x="205.65" y="526.3" width="3.5" height="20.1" rx="1.2" fill="#ec4424" stroke="#2a2a2a" stroke-width="0.9"/>
<line x1="212.8" y1="556.8" x2="212.8" y2="575.2" stroke="#454545" stroke-width="1"/>
<rect x="211.09" y="557.4" width="3.5" height="17.4" rx="1.2" fill="#ec4424" stroke="#2a2a2a" stroke-width="0.9"/>
<line x1="218.3" y1="564.8" x2="218.3" y2="579.6" stroke="#454545" stroke-width="1"/>
<rect x="216.54" y="570.6" width="3.5" height="8.6" rx="1.2" fill="#ec4424" stroke="#2a2a2a" stroke-width="0.9"/>
<line x1="223.7" y1="571.5" x2="223.7" y2="585.4" stroke="#454545" stroke-width="1"/>
<rect x="221.98" y="572.2" width="3.5" height="10.5" rx="1.2" fill="#0b9e3e" stroke="#2a2a2a" stroke-width="0.9"/>
<line x1="229.2" y1="581.3" x2="229.2" y2="600.4" stroke="#454545" stroke-width="1"/>
<rect x="227.43" y="581.9" width="3.5" height="15.6" rx="1.2" fill="#ec4424" stroke="#2a2a2a" stroke-width="0.9"/>
<line x1="234.6" y1="591.0" x2="234.6" y2="610.9" stroke="#454545" stroke-width="1"/>
<rect x="232.88" y="593.7" width="3.5" height="3.4" rx="1.2" fill="#ec4424" stroke="#2a2a2a" stroke-width="0.9"/>
<line x1="240.1" y1="580.9" x2="240.1" y2="600.4" stroke="#454545" stroke-width="1"/>
<rect x="238.32" y="587.2" width="3.5" height="11.8" rx="1.2" fill="#0b9e3e" stroke="#2a2a2a" stroke-width="0.9"/>
<line x1="245.5" y1="574.6" x2="245.5" y2="596.4" stroke="#454545" stroke-width="1"/>
<rect x="243.77" y="575.2" width="3.5" height="16.1" rx="1.2" fill="#ec4424" stroke="#2a2a2a" stroke-width="0.9"/>
<line x1="251.0" y1="587.0" x2="251.0" y2="602.0" stroke="#454545" stroke-width="1"/>
<rect x="249.21" y="591.6" width="3.5" height="1.5" rx="1.2" fill="#0b9e3e" stroke="#2a2a2a" stroke-width="0.9"/>
<line x1="256.4" y1="595.0" x2="256.4" y2="619.2" stroke="#454545" stroke-width="1"/>
<rect x="254.66" y="599.1" width="3.5" height="15.4" rx="1.2" fill="#ec4424" stroke="#2a2a2a" stroke-width="0.9"/>
<line x1="261.9" y1="600.7" x2="261.9" y2="617.9" stroke="#454545" stroke-width="1"/>
<rect x="260.11" y="601.5" width="3.5" height="11.7" rx="1.2" fill="#0b9e3e" stroke="#2a2a2a" stroke-width="0.9"/>
<line x1="267.3" y1="601.1" x2="267.3" y2="615.8" stroke="#454545" stroke-width="1"/>
<rect x="265.55" y="602.1" width="3.5" height="1.5" rx="1.2" fill="#0b9e3e" stroke="#2a2a2a" stroke-width="0.9"/>
<line x1="272.7" y1="578.3" x2="272.7" y2="617.6" stroke="#454545" stroke-width="1"/>
<rect x="271.00" y="583.6" width="3.5" height="29.1" rx="1.2" fill="#0b9e3e" stroke="#2a2a2a" stroke-width="0.9"/>
<line x1="278.2" y1="571.5" x2="278.2" y2="591.7" stroke="#454545" stroke-width="1"/>
<rect x="276.44" y="572.5" width="3.5" height="18.8" rx="1.2" fill="#0b9e3e" stroke="#2a2a2a" stroke-width="0.9"/>
<line x1="283.6" y1="553.4" x2="283.6" y2="571.5" stroke="#454545" stroke-width="1"/>
<rect x="281.89" y="564.2" width="3.5" height="6.7" rx="1.2" fill="#0b9e3e" stroke="#2a2a2a" stroke-width="0.9"/>
<line x1="289.1" y1="555.4" x2="289.1" y2="568.2" stroke="#454545" stroke-width="1"/>
<rect x="287.34" y="556.8" width="3.5" height="3.4" rx="1.2" fill="#0b9e3e" stroke="#2a2a2a" stroke-width="0.9"/>
<line x1="294.5" y1="554.0" x2="294.5" y2="576.3" stroke="#454545" stroke-width="1"/>
<rect x="292.78" y="554.8" width="3.5" height="12.2" rx="1.2" fill="#ec4424" stroke="#2a2a2a" stroke-width="0.9"/>
<line x1="300.0" y1="557.5" x2="300.0" y2="581.9" stroke="#454545" stroke-width="1"/>
<rect x="298.23" y="563.6" width="3.5" height="12.7" rx="1.2" fill="#ec4424" stroke="#2a2a2a" stroke-width="0.9"/>
<line x1="305.4" y1="554.3" x2="305.4" y2="570.0" stroke="#454545" stroke-width="1"/>
<rect x="303.67" y="558.3" width="3.5" height="11.3" rx="1.2" fill="#0b9e3e" stroke="#2a2a2a" stroke-width="0.9"/>
<line x1="310.9" y1="550.8" x2="310.9" y2="571.1" stroke="#454545" stroke-width="1"/>
<rect x="309.12" y="557.8" width="3.5" height="10.5" rx="1.2" fill="#0b9e3e" stroke="#2a2a2a" stroke-width="0.9"/>
<line x1="316.3" y1="561.8" x2="316.3" y2="584.5" stroke="#454545" stroke-width="1"/>
<rect x="314.57" y="564.4" width="3.5" height="16.6" rx="1.2" fill="#ec4424" stroke="#2a2a2a" stroke-width="0.9"/>
<line x1="321.8" y1="572.3" x2="321.8" y2="598.5" stroke="#454545" stroke-width="1"/>
<rect x="320.01" y="578.7" width="3.5" height="17.1" rx="1.2" fill="#ec4424" stroke="#2a2a2a" stroke-width="0.9"/>
<line x1="327.2" y1="596.7" x2="327.2" y2="617.7" stroke="#454545" stroke-width="1"/>
<rect x="325.46" y="597.6" width="3.5" height="19.2" rx="1.2" fill="#ec4424" stroke="#2a2a2a" stroke-width="0.9"/>
<line x1="332.7" y1="604.6" x2="332.7" y2="629.9" stroke="#454545" stroke-width="1"/>
<rect x="330.90" y="619.9" width="3.5" height="2.1" rx="1.2" fill="#0b9e3e" stroke="#2a2a2a" stroke-width="0.9"/>
<line x1="338.1" y1="602.8" x2="338.1" y2="616.8" stroke="#454545" stroke-width="1"/>
<rect x="336.35" y="607.2" width="3.5" height="5.2" rx="1.2" fill="#0b9e3e" stroke="#2a2a2a" stroke-width="0.9"/>
<line x1="343.5" y1="613.3" x2="343.5" y2="632.5" stroke="#454545" stroke-width="1"/>
<rect x="341.80" y="614.2" width="3.5" height="18.0" rx="1.2" fill="#ec4424" stroke="#2a2a2a" stroke-width="0.9"/>
<line x1="349.0" y1="633.4" x2="349.0" y2="655.2" stroke="#454545" stroke-width="1"/>
<rect x="347.24" y="635.6" width="3.5" height="15.2" rx="1.2" fill="#ec4424" stroke="#2a2a2a" stroke-width="0.9"/>
<line x1="354.4" y1="644.4" x2="354.4" y2="664.3" stroke="#454545" stroke-width="1"/>
<rect x="352.69" y="645.2" width="3.5" height="13.4" rx="1.2" fill="#ec4424" stroke="#2a2a2a" stroke-width="0.9"/>
<line x1="359.9" y1="635.6" x2="359.9" y2="651.7" stroke="#454545" stroke-width="1"/>
<rect x="358.13" y="639.8" width="3.5" height="10.5" rx="1.2" fill="#0b9e3e" stroke="#2a2a2a" stroke-width="0.9"/>
<line x1="365.3" y1="628.1" x2="365.3" y2="644.7" stroke="#454545" stroke-width="1"/>
<rect x="363.58" y="629.4" width="3.5" height="8.4" rx="1.2" fill="#0b9e3e" stroke="#2a2a2a" stroke-width="0.9"/>
<line x1="370.8" y1="608.9" x2="370.8" y2="626.4" stroke="#454545" stroke-width="1"/>
<rect x="369.03" y="611.6" width="3.5" height="14.0" rx="1.2" fill="#0b9e3e" stroke="#2a2a2a" stroke-width="0.9"/>
<line x1="376.2" y1="579.3" x2="376.2" y2="600.2" stroke="#454545" stroke-width="1"/>
<rect x="374.47" y="580.1" width="3.5" height="19.2" rx="1.2" fill="#0b9e3e" stroke="#2a2a2a" stroke-width="0.9"/>
<line x1="381.7" y1="558.2" x2="381.7" y2="571.1" stroke="#454545" stroke-width="1"/>
<rect x="379.92" y="564.7" width="3.5" height="6.4" rx="1.2" fill="#0b9e3e" stroke="#2a2a2a" stroke-width="0.9"/>
<line x1="387.1" y1="559.0" x2="387.1" y2="567.1" stroke="#454545" stroke-width="1"/>
<rect x="385.36" y="560.5" width="3.5" height="1.5" rx="1.2" fill="#0b9e3e" stroke="#2a2a2a" stroke-width="0.9"/>
<line x1="392.6" y1="553.4" x2="392.6" y2="563.9" stroke="#454545" stroke-width="1"/>
<rect x="390.81" y="556.6" width="3.5" height="4.0" rx="1.2" fill="#0b9e3e" stroke="#2a2a2a" stroke-width="0.9"/>
<line x1="398.0" y1="551.8" x2="398.0" y2="563.1" stroke="#454545" stroke-width="1"/>
<rect x="396.26" y="552.6" width="3.5" height="1.5" rx="1.2" fill="#0b9e3e" stroke="#2a2a2a" stroke-width="0.9"/>
<line x1="403.5" y1="550.5" x2="403.5" y2="568.7" stroke="#454545" stroke-width="1"/>
<rect x="401.70" y="551.0" width="3.5" height="16.9" rx="1.2" fill="#ec4424" stroke="#2a2a2a" stroke-width="0.9"/>
<line x1="408.9" y1="540.5" x2="408.9" y2="565.5" stroke="#454545" stroke-width="1"/>
<rect x="407.15" y="541.3" width="3.5" height="20.1" rx="1.2" fill="#0b9e3e" stroke="#2a2a2a" stroke-width="0.9"/>
<line x1="414.3" y1="538.9" x2="414.3" y2="548.6" stroke="#454545" stroke-width="1"/>
<rect x="412.59" y="542.9" width="3.5" height="1.6" rx="1.2" fill="#0b9e3e" stroke="#2a2a2a" stroke-width="0.9"/>
<line x1="419.8" y1="505.1" x2="419.8" y2="524.4" stroke="#454545" stroke-width="1"/>
<rect x="418.04" y="509.1" width="3.5" height="15.0" rx="1.2" fill="#0b9e3e" stroke="#2a2a2a" stroke-width="0.9"/>
<line x1="425.2" y1="499.5" x2="425.2" y2="509.1" stroke="#454545" stroke-width="1"/>
<rect x="423.49" y="505.7" width="3.5" height="1.5" rx="1.2" fill="#ec4424" stroke="#2a2a2a" stroke-width="0.9"/>
<line x1="430.7" y1="503.5" x2="430.7" y2="511.5" stroke="#454545" stroke-width="1"/>
<rect x="428.93" y="504.3" width="3.5" height="4.8" rx="1.2" fill="#0b9e3e" stroke="#2a2a2a" stroke-width="0.9"/>
<line x1="436.1" y1="500.3" x2="436.1" y2="507.5" stroke="#454545" stroke-width="1"/>
<rect x="434.38" y="502.5" width="3.5" height="1.5" rx="1.2" fill="#0b9e3e" stroke="#2a2a2a" stroke-width="0.9"/>
<line x1="441.6" y1="485.4" x2="441.6" y2="503.5" stroke="#454545" stroke-width="1"/>
<rect x="439.82" y="489.0" width="3.5" height="14.2" rx="1.2" fill="#0b9e3e" stroke="#2a2a2a" stroke-width="0.9"/>
<line x1="447.0" y1="491.9" x2="447.0" y2="497.4" stroke="#454545" stroke-width="1"/>
<rect x="445.27" y="491.9" width="3.5" height="1.5" rx="1.2" fill="#ec4424" stroke="#2a2a2a" stroke-width="0.9"/>
<line x1="452.5" y1="480.9" x2="452.5" y2="489.8" stroke="#454545" stroke-width="1"/>
<rect x="450.72" y="485.3" width="3.5" height="1.5" rx="1.2" fill="#0b9e3e" stroke="#2a2a2a" stroke-width="0.9"/>
<line x1="457.9" y1="484.2" x2="457.9" y2="485.8" stroke="#454545" stroke-width="1"/>
<rect x="456.16" y="484.3" width="3.5" height="1.5" rx="1.2" fill="#0b9e3e" stroke="#2a2a2a" stroke-width="0.9"/>
<line x1="463.4" y1="485.8" x2="463.4" y2="488.7" stroke="#454545" stroke-width="1"/>
<rect x="461.61" y="486.4" width="3.5" height="1.5" rx="1.2" fill="#ec4424" stroke="#2a2a2a" stroke-width="0.9"/>
<line x1="468.8" y1="480.9" x2="468.8" y2="491.4" stroke="#454545" stroke-width="1"/>
<rect x="467.05" y="486.6" width="3.5" height="3.2" rx="1.2" fill="#0b9e3e" stroke="#2a2a2a" stroke-width="0.9"/>
<line x1="474.2" y1="474.2" x2="474.2" y2="487.9" stroke="#454545" stroke-width="1"/>
<rect x="472.50" y="479.8" width="3.5" height="7.7" rx="1.2" fill="#ec4424" stroke="#2a2a2a" stroke-width="0.9"/>
<line x1="479.7" y1="480.6" x2="479.7" y2="491.9" stroke="#454545" stroke-width="1"/>
<rect x="477.95" y="481.1" width="3.5" height="5.2" rx="1.2" fill="#0b9e3e" stroke="#2a2a2a" stroke-width="0.9"/>
<line x1="485.1" y1="468.6" x2="485.1" y2="484.7" stroke="#454545" stroke-width="1"/>
<rect x="483.39" y="470.2" width="3.5" height="13.7" rx="1.2" fill="#0b9e3e" stroke="#2a2a2a" stroke-width="0.9"/>
<line x1="490.6" y1="479.8" x2="490.6" y2="488.2" stroke="#454545" stroke-width="1"/>
<rect x="488.84" y="480.5" width="3.5" height="1.5" rx="1.2" fill="#0b9e3e" stroke="#2a2a2a" stroke-width="0.9"/>
<line x1="496.0" y1="477.4" x2="496.0" y2="485.5" stroke="#454545" stroke-width="1"/>
<rect x="494.28" y="481.8" width="3.5" height="2.9" rx="1.2" fill="#0b9e3e" stroke="#2a2a2a" stroke-width="0.9"/>
<line x1="501.5" y1="473.1" x2="501.5" y2="488.7" stroke="#454545" stroke-width="1"/>
<rect x="499.73" y="474.2" width="3.5" height="14.0" rx="1.2" fill="#ec4424" stroke="#2a2a2a" stroke-width="0.9"/>
<line x1="506.9" y1="473.4" x2="506.9" y2="481.1" stroke="#454545" stroke-width="1"/>
<rect x="505.18" y="474.2" width="3.5" height="6.4" rx="1.2" fill="#0b9e3e" stroke="#2a2a2a" stroke-width="0.9"/>
<line x1="512.4" y1="465.3" x2="512.4" y2="477.9" stroke="#454545" stroke-width="1"/>
<rect x="510.62" y="466.6" width="3.5" height="10.8" rx="1.2" fill="#0b9e3e" stroke="#2a2a2a" stroke-width="0.9"/>
<line x1="517.8" y1="458.6" x2="517.8" y2="471.0" stroke="#454545" stroke-width="1"/>
<rect x="516.07" y="459.2" width="3.5" height="11.3" rx="1.2" fill="#0b9e3e" stroke="#2a2a2a" stroke-width="0.9"/>
<line x1="523.3" y1="450.0" x2="523.3" y2="464.5" stroke="#454545" stroke-width="1"/>
<rect x="521.51" y="450.9" width="3.5" height="9.7" rx="1.2" fill="#0b9e3e" stroke="#2a2a2a" stroke-width="0.9"/>
<line x1="528.7" y1="425.1" x2="528.7" y2="450.5" stroke="#454545" stroke-width="1"/>
<rect x="526.96" y="425.9" width="3.5" height="24.2" rx="1.2" fill="#0b9e3e" stroke="#2a2a2a" stroke-width="0.9"/>
<line x1="534.2" y1="413.8" x2="534.2" y2="430.2" stroke="#454545" stroke-width="1"/>
<rect x="532.41" y="419.9" width="3.5" height="1.5" rx="1.2" fill="#0b9e3e" stroke="#2a2a2a" stroke-width="0.9"/>
<line x1="539.6" y1="421.1" x2="539.6" y2="425.9" stroke="#454545" stroke-width="1"/>
<rect x="537.85" y="421.5" width="3.5" height="2.3" rx="1.2" fill="#0b9e3e" stroke="#2a2a2a" stroke-width="0.9"/>
<line x1="545.0" y1="409.0" x2="545.0" y2="418.6" stroke="#454545" stroke-width="1"/>
<rect x="543.30" y="412.5" width="3.5" height="5.8" rx="1.2" fill="#0b9e3e" stroke="#2a2a2a" stroke-width="0.9"/>
<line x1="550.5" y1="401.1" x2="550.5" y2="411.4" stroke="#454545" stroke-width="1"/>
<rect x="548.74" y="401.7" width="3.5" height="9.1" rx="1.2" fill="#0b9e3e" stroke="#2a2a2a" stroke-width="0.9"/>
<line x1="555.9" y1="398.1" x2="555.9" y2="428.9" stroke="#454545" stroke-width="1"/>
<rect x="554.19" y="403.3" width="3.5" height="25.2" rx="1.2" fill="#ec4424" stroke="#2a2a2a" stroke-width="0.9"/>
<line x1="561.4" y1="409.7" x2="561.4" y2="424.8" stroke="#454545" stroke-width="1"/>
<rect x="559.64" y="410.6" width="3.5" height="8.3" rx="1.2" fill="#0b9e3e" stroke="#2a2a2a" stroke-width="0.9"/>
<line x1="566.8" y1="400.1" x2="566.8" y2="413.5" stroke="#454545" stroke-width="1"/>
<rect x="565.08" y="406.4" width="3.5" height="1.5" rx="1.2" fill="#0b9e3e" stroke="#2a2a2a" stroke-width="0.9"/>
<line x1="572.3" y1="395.2" x2="572.3" y2="405.2" stroke="#454545" stroke-width="1"/>
<rect x="570.53" y="398.8" width="3.5" height="6.1" rx="1.2" fill="#0b9e3e" stroke="#2a2a2a" stroke-width="0.9"/>
<line x1="577.7" y1="395.6" x2="577.7" y2="400.1" stroke="#454545" stroke-width="1"/>
<rect x="575.97" y="396.3" width="3.5" height="3.2" rx="1.2" fill="#0b9e3e" stroke="#2a2a2a" stroke-width="0.9"/>
<line x1="583.2" y1="392.0" x2="583.2" y2="395.8" stroke="#454545" stroke-width="1"/>
<rect x="581.42" y="394.1" width="3.5" height="1.5" rx="1.2" fill="#ec4424" stroke="#2a2a2a" stroke-width="0.9"/>
<line x1="588.6" y1="393.4" x2="588.6" y2="407.6" stroke="#454545" stroke-width="1"/>
<rect x="586.87" y="395.8" width="3.5" height="5.2" rx="1.2" fill="#ec4424" stroke="#2a2a2a" stroke-width="0.9"/>
<line x1="594.1" y1="407.1" x2="594.1" y2="419.4" stroke="#454545" stroke-width="1"/>
<rect x="592.31" y="410.4" width="3.5" height="1.5" rx="1.2" fill="#ec4424" stroke="#2a2a2a" stroke-width="0.9"/>
<line x1="599.5" y1="418.3" x2="599.5" y2="427.5" stroke="#454545" stroke-width="1"/>
<rect x="597.76" y="418.9" width="3.5" height="8.1" rx="1.2" fill="#ec4424" stroke="#2a2a2a" stroke-width="0.9"/>
<line x1="605.0" y1="418.3" x2="605.0" y2="433.6" stroke="#454545" stroke-width="1"/>
<rect x="603.20" y="429.6" width="3.5" height="3.8" rx="1.2" fill="#ec4424" stroke="#2a2a2a" stroke-width="0.9"/>
<line x1="610.4" y1="421.0" x2="610.4" y2="435.0" stroke="#454545" stroke-width="1"/>
<rect x="608.65" y="429.6" width="3.5" height="2.7" rx="1.2" fill="#0b9e3e" stroke="#2a2a2a" stroke-width="0.9"/>
<line x1="615.8" y1="403.3" x2="615.8" y2="427.8" stroke="#454545" stroke-width="1"/>
<rect x="614.10" y="403.8" width="3.5" height="23.6" rx="1.2" fill="#0b9e3e" stroke="#2a2a2a" stroke-width="0.9"/>
<line x1="621.3" y1="402.8" x2="621.3" y2="416.0" stroke="#454545" stroke-width="1"/>
<rect x="619.54" y="406.5" width="3.5" height="5.4" rx="1.2" fill="#0b9e3e" stroke="#2a2a2a" stroke-width="0.9"/>
<line x1="626.7" y1="393.1" x2="626.7" y2="404.9" stroke="#454545" stroke-width="1"/>
<rect x="624.99" y="395.6" width="3.5" height="9.0" rx="1.2" fill="#0b9e3e" stroke="#2a2a2a" stroke-width="0.9"/>
<line x1="632.2" y1="389.9" x2="632.2" y2="412.1" stroke="#454545" stroke-width="1"/>
<rect x="630.43" y="392.0" width="3.5" height="4.3" rx="1.2" fill="#ec4424" stroke="#2a2a2a" stroke-width="0.9"/>
<line x1="637.6" y1="388.5" x2="637.6" y2="400.9" stroke="#454545" stroke-width="1"/>
<rect x="635.88" y="392.3" width="3.5" height="3.2" rx="1.2" fill="#ec4424" stroke="#2a2a2a" stroke-width="0.9"/>
<line x1="643.1" y1="396.4" x2="643.1" y2="408.7" stroke="#454545" stroke-width="1"/>
<rect x="641.33" y="399.4" width="3.5" height="3.7" rx="1.2" fill="#ec4424" stroke="#2a2a2a" stroke-width="0.9"/>
<line x1="648.5" y1="410.4" x2="648.5" y2="417.8" stroke="#454545" stroke-width="1"/>
<rect x="646.77" y="411.4" width="3.5" height="1.5" rx="1.2" fill="#ec4424" stroke="#2a2a2a" stroke-width="0.9"/>
<line x1="654.0" y1="394.9" x2="654.0" y2="411.9" stroke="#454545" stroke-width="1"/>
<rect x="652.22" y="396.4" width="3.5" height="8.1" rx="1.2" fill="#0b9e3e" stroke="#2a2a2a" stroke-width="0.9"/>
<line x1="659.4" y1="372.8" x2="659.4" y2="393.9" stroke="#454545" stroke-width="1"/>
<rect x="657.66" y="373.2" width="3.5" height="17.3" rx="1.2" fill="#0b9e3e" stroke="#2a2a2a" stroke-width="0.9"/>
<line x1="664.9" y1="362.4" x2="664.9" y2="370.6" stroke="#454545" stroke-width="1"/>
<rect x="663.11" y="367.7" width="3.5" height="1.5" rx="1.2" fill="#ec4424" stroke="#2a2a2a" stroke-width="0.9"/>
<line x1="670.3" y1="363.2" x2="670.3" y2="370.6" stroke="#454545" stroke-width="1"/>
<rect x="668.56" y="363.9" width="3.5" height="2.2" rx="1.2" fill="#0b9e3e" stroke="#2a2a2a" stroke-width="0.9"/>
<line x1="675.8" y1="348.7" x2="675.8" y2="362.4" stroke="#454545" stroke-width="1"/>
<rect x="674.00" y="354.0" width="3.5" height="7.7" rx="1.2" fill="#ec4424" stroke="#2a2a2a" stroke-width="0.9"/>
<line x1="681.2" y1="351.4" x2="681.2" y2="361.0" stroke="#454545" stroke-width="1"/>
<rect x="679.45" y="352.1" width="3.5" height="2.2" rx="1.2" fill="#0b9e3e" stroke="#2a2a2a" stroke-width="0.9"/>
<line x1="686.6" y1="346.9" x2="686.6" y2="356.1" stroke="#454545" stroke-width="1"/>
<rect x="684.89" y="352.8" width="3.5" height="1.5" rx="1.2" fill="#ec4424" stroke="#2a2a2a" stroke-width="0.9"/>
<line x1="692.1" y1="337.8" x2="692.1" y2="353.1" stroke="#454545" stroke-width="1"/>
<rect x="690.34" y="338.4" width="3.5" height="14.2" rx="1.2" fill="#0b9e3e" stroke="#2a2a2a" stroke-width="0.9"/>
<line x1="697.5" y1="338.8" x2="697.5" y2="343.2" stroke="#454545" stroke-width="1"/>
<rect x="695.79" y="338.8" width="3.5" height="1.5" rx="1.2" fill="#ec4424" stroke="#2a2a2a" stroke-width="0.9"/>
<line x1="703.0" y1="347.7" x2="703.0" y2="370.9" stroke="#454545" stroke-width="1"/>
<rect x="701.23" y="349.9" width="3.5" height="20.7" rx="1.2" fill="#ec4424" stroke="#2a2a2a" stroke-width="0.9"/>
<line x1="708.4" y1="346.2" x2="708.4" y2="366.9" stroke="#454545" stroke-width="1"/>
<rect x="706.68" y="347.2" width="3.5" height="17.4" rx="1.2" fill="#0b9e3e" stroke="#2a2a2a" stroke-width="0.9"/>
<line x1="713.9" y1="320.3" x2="713.9" y2="345.2" stroke="#454545" stroke-width="1"/>
<rect x="712.12" y="326.2" width="3.5" height="17.0" rx="1.2" fill="#0b9e3e" stroke="#2a2a2a" stroke-width="0.9"/>
<line x1="719.3" y1="326.5" x2="719.3" y2="341.8" stroke="#454545" stroke-width="1"/>
<rect x="717.57" y="327.4" width="3.5" height="4.7" rx="1.2" fill="#ec4424" stroke="#2a2a2a" stroke-width="0.9"/>
<line x1="724.8" y1="327.3" x2="724.8" y2="334.5" stroke="#454545" stroke-width="1"/>
<rect x="723.02" y="328.2" width="3.5" height="1.5" rx="1.2" fill="#0b9e3e" stroke="#2a2a2a" stroke-width="0.9"/>
<line x1="730.2" y1="311.0" x2="730.2" y2="320.7" stroke="#454545" stroke-width="1"/>
<rect x="728.46" y="311.6" width="3.5" height="8.5" rx="1.2" fill="#0b9e3e" stroke="#2a2a2a" stroke-width="0.9"/>
<line x1="735.7" y1="310.1" x2="735.7" y2="314.6" stroke="#454545" stroke-width="1"/>
<rect x="733.91" y="310.5" width="3.5" height="1.5" rx="1.2" fill="#0b9e3e" stroke="#2a2a2a" stroke-width="0.9"/>
<line x1="741.1" y1="298.3" x2="741.1" y2="308.9" stroke="#454545" stroke-width="1"/>
<rect x="739.35" y="298.9" width="3.5" height="9.7" rx="1.2" fill="#0b9e3e" stroke="#2a2a2a" stroke-width="0.9"/>
<line x1="746.5" y1="291.1" x2="746.5" y2="301.9" stroke="#454545" stroke-width="1"/>
<rect x="744.80" y="299.5" width="3.5" height="1.8" rx="1.2" fill="#ec4424" stroke="#2a2a2a" stroke-width="0.9"/>
<line x1="752.0" y1="321.9" x2="752.0" y2="341.2" stroke="#454545" stroke-width="1"/>
<rect x="750.25" y="322.5" width="3.5" height="6.0" rx="1.2" fill="#ec4424" stroke="#2a2a2a" stroke-width="0.9"/>
<line x1="757.4" y1="309.2" x2="757.4" y2="326.1" stroke="#454545" stroke-width="1"/>
<rect x="755.69" y="309.8" width="3.5" height="9.1" rx="1.2" fill="#0b9e3e" stroke="#2a2a2a" stroke-width="0.9"/>
<line x1="762.9" y1="297.7" x2="762.9" y2="309.2" stroke="#454545" stroke-width="1"/>
<rect x="761.14" y="298.3" width="3.5" height="10.3" rx="1.2" fill="#0b9e3e" stroke="#2a2a2a" stroke-width="0.9"/>
<line x1="768.3" y1="294.7" x2="768.3" y2="309.8" stroke="#454545" stroke-width="1"/>
<rect x="766.58" y="298.1" width="3.5" height="9.3" rx="1.2" fill="#ec4424" stroke="#2a2a2a" stroke-width="0.9"/>
<line x1="773.8" y1="313.4" x2="773.8" y2="327.3" stroke="#454545" stroke-width="1"/>
<rect x="772.03" y="314.0" width="3.5" height="5.4" rx="1.2" fill="#ec4424" stroke="#2a2a2a" stroke-width="0.9"/>
<line x1="779.2" y1="317.0" x2="779.2" y2="330.9" stroke="#454545" stroke-width="1"/>
<rect x="777.48" y="317.6" width="3.5" height="6.6" rx="1.2" fill="#0b9e3e" stroke="#2a2a2a" stroke-width="0.9"/>
<line x1="784.7" y1="272.9" x2="784.7" y2="294.7" stroke="#454545" stroke-width="1"/>
<rect x="782.92" y="275.4" width="3.5" height="19.1" rx="1.2" fill="#0b9e3e" stroke="#2a2a2a" stroke-width="0.9"/>
<line x1="790.1" y1="265.7" x2="790.1" y2="277.2" stroke="#454545" stroke-width="1"/>
<rect x="788.37" y="270.3" width="3.5" height="4.5" rx="1.2" fill="#ec4424" stroke="#2a2a2a" stroke-width="0.9"/>
<line x1="795.6" y1="272.3" x2="795.6" y2="282.6" stroke="#454545" stroke-width="1"/>
<rect x="793.81" y="273.6" width="3.5" height="8.8" rx="1.2" fill="#ec4424" stroke="#2a2a2a" stroke-width="0.9"/>
<line x1="801.0" y1="278.4" x2="801.0" y2="286.8" stroke="#454545" stroke-width="1"/>
<rect x="799.26" y="278.7" width="3.5" height="1.5" rx="1.2" fill="#0b9e3e" stroke="#2a2a2a" stroke-width="0.9"/>
<line x1="806.5" y1="280.1" x2="806.5" y2="285.6" stroke="#454545" stroke-width="1"/>
<rect x="804.71" y="281.7" width="3.5" height="1.5" rx="1.2" fill="#ec4424" stroke="#2a2a2a" stroke-width="0.9"/>
<line x1="811.9" y1="268.7" x2="811.9" y2="285.0" stroke="#454545" stroke-width="1"/>
<rect x="810.15" y="272.3" width="3.5" height="3.0" rx="1.2" fill="#0b9e3e" stroke="#2a2a2a" stroke-width="0.9"/>
<line x1="817.3" y1="254.8" x2="817.3" y2="271.3" stroke="#454545" stroke-width="1"/>
<rect x="815.60" y="255.4" width="3.5" height="15.5" rx="1.2" fill="#0b9e3e" stroke="#2a2a2a" stroke-width="0.9"/>
<line x1="822.8" y1="250.8" x2="822.8" y2="259.0" stroke="#454545" stroke-width="1"/>
<rect x="821.04" y="257.2" width="3.5" height="1.5" rx="1.2" fill="#ec4424" stroke="#2a2a2a" stroke-width="0.9"/>
<line x1="828.2" y1="265.0" x2="828.2" y2="285.0" stroke="#454545" stroke-width="1"/>
<rect x="826.49" y="266.3" width="3.5" height="12.1" rx="1.2" fill="#ec4424" stroke="#2a2a2a" stroke-width="0.9"/>
<line x1="833.7" y1="260.0" x2="833.7" y2="272.3" stroke="#454545" stroke-width="1"/>
<rect x="831.94" y="267.1" width="3.5" height="1.5" rx="1.2" fill="#ec4424" stroke="#2a2a2a" stroke-width="0.9"/>
<line x1="839.1" y1="244.5" x2="839.1" y2="257.8" stroke="#454545" stroke-width="1"/>
<rect x="837.38" y="247.5" width="3.5" height="9.7" rx="1.2" fill="#0b9e3e" stroke="#2a2a2a" stroke-width="0.9"/>
<line x1="844.6" y1="235.5" x2="844.6" y2="261.7" stroke="#454545" stroke-width="1"/>
<rect x="842.83" y="244.8" width="3.5" height="16.4" rx="1.2" fill="#ec4424" stroke="#2a2a2a" stroke-width="0.9"/>
<line x1="850.0" y1="261.2" x2="850.0" y2="273.3" stroke="#454545" stroke-width="1"/>
<rect x="848.27" y="263.6" width="3.5" height="1.7" rx="1.2" fill="#0b9e3e" stroke="#2a2a2a" stroke-width="0.9"/>
<line x1="855.5" y1="239.4" x2="855.5" y2="263.8" stroke="#454545" stroke-width="1"/>
<rect x="853.72" y="240.3" width="3.5" height="16.5" rx="1.2" fill="#0b9e3e" stroke="#2a2a2a" stroke-width="0.9"/>
<line x1="860.9" y1="240.3" x2="860.9" y2="248.7" stroke="#454545" stroke-width="1"/>
<rect x="859.17" y="241.9" width="3.5" height="2.1" rx="1.2" fill="#ec4424" stroke="#2a2a2a" stroke-width="0.9"/>
<line x1="866.4" y1="240.3" x2="866.4" y2="260.2" stroke="#454545" stroke-width="1"/>
<rect x="864.61" y="240.7" width="3.5" height="9.3" rx="1.2" fill="#ec4424" stroke="#2a2a2a" stroke-width="0.9"/>
<line x1="871.8" y1="256.0" x2="871.8" y2="268.1" stroke="#454545" stroke-width="1"/>
<rect x="870.06" y="261.4" width="3.5" height="1.8" rx="1.2" fill="#ec4424" stroke="#2a2a2a" stroke-width="0.9"/>
<line x1="877.3" y1="240.7" x2="877.3" y2="250.6" stroke="#454545" stroke-width="1"/>
<rect x="875.50" y="249.1" width="3.5" height="1.5" rx="1.2" fill="#ec4424" stroke="#2a2a2a" stroke-width="0.9"/>
<line x1="882.7" y1="238.5" x2="882.7" y2="256.6" stroke="#454545" stroke-width="1"/>
<rect x="880.95" y="239.4" width="3.5" height="14.7" rx="1.2" fill="#0b9e3e" stroke="#2a2a2a" stroke-width="0.9"/>
<line x1="888.1" y1="220.4" x2="888.1" y2="241.5" stroke="#454545" stroke-width="1"/>
<rect x="886.40" y="221.0" width="3.5" height="16.3" rx="1.2" fill="#0b9e3e" stroke="#2a2a2a" stroke-width="0.9"/>
<line x1="893.6" y1="207.1" x2="893.6" y2="214.3" stroke="#454545" stroke-width="1"/>
<rect x="891.84" y="209.3" width="3.5" height="4.8" rx="1.2" fill="#ec4424" stroke="#2a2a2a" stroke-width="0.9"/>
<line x1="899.0" y1="213.1" x2="899.0" y2="217.3" stroke="#454545" stroke-width="1"/>
<rect x="897.29" y="213.7" width="3.5" height="3.3" rx="1.2" fill="#ec4424" stroke="#2a2a2a" stroke-width="0.9"/>
<line x1="904.5" y1="219.8" x2="904.5" y2="224.0" stroke="#454545" stroke-width="1"/>
<rect x="902.73" y="222.4" width="3.5" height="1.5" rx="1.2" fill="#ec4424" stroke="#2a2a2a" stroke-width="0.9"/>
<line x1="909.9" y1="217.3" x2="909.9" y2="229.4" stroke="#454545" stroke-width="1"/>
<rect x="908.18" y="218.6" width="3.5" height="10.3" rx="1.2" fill="#ec4424" stroke="#2a2a2a" stroke-width="0.9"/>
<line x1="915.4" y1="210.7" x2="915.4" y2="224.6" stroke="#454545" stroke-width="1"/>
<rect x="913.63" y="211.3" width="3.5" height="8.8" rx="1.2" fill="#0b9e3e" stroke="#2a2a2a" stroke-width="0.9"/>
<line x1="920.8" y1="205.3" x2="920.8" y2="211.9" stroke="#454545" stroke-width="1"/>
<rect x="919.07" y="209.5" width="3.5" height="1.5" rx="1.2" fill="#0b9e3e" stroke="#2a2a2a" stroke-width="0.9"/>
<line x1="926.3" y1="206.5" x2="926.3" y2="218.6" stroke="#454545" stroke-width="1"/>
<rect x="924.52" y="207.1" width="3.5" height="6.0" rx="1.2" fill="#ec4424" stroke="#2a2a2a" stroke-width="0.9"/>
<line x1="931.7" y1="227.6" x2="931.7" y2="236.7" stroke="#454545" stroke-width="1"/>
<rect x="929.96" y="227.5" width="3.5" height="1.5" rx="1.2" fill="#ec4424" stroke="#2a2a2a" stroke-width="0.9"/>
<line x1="937.2" y1="220.4" x2="937.2" y2="233.4" stroke="#454545" stroke-width="1"/>
<rect x="935.41" y="226.2" width="3.5" height="6.5" rx="1.2" fill="#0b9e3e" stroke="#2a2a2a" stroke-width="0.9"/>
<line x1="942.6" y1="208.3" x2="942.6" y2="251.5" stroke="#454545" stroke-width="1"/>
<rect x="940.86" y="213.1" width="3.5" height="38.0" rx="1.2" fill="#ec4424" stroke="#2a2a2a" stroke-width="0.9"/>
<line x1="948.1" y1="222.2" x2="948.1" y2="247.5" stroke="#454545" stroke-width="1"/>
<rect x="946.30" y="228.8" width="3.5" height="17.9" rx="1.2" fill="#0b9e3e" stroke="#2a2a2a" stroke-width="0.9"/>
<line x1="953.5" y1="224.0" x2="953.5" y2="230.0" stroke="#454545" stroke-width="1"/>
<rect x="951.75" y="226.2" width="3.5" height="3.6" rx="1.2" fill="#ec4424" stroke="#2a2a2a" stroke-width="0.9"/>
<line x1="958.9" y1="221.0" x2="958.9" y2="245.7" stroke="#454545" stroke-width="1"/>
<rect x="957.19" y="224.4" width="3.5" height="1.5" rx="1.2" fill="#ec4424" stroke="#2a2a2a" stroke-width="0.9"/>
<line x1="964.4" y1="242.7" x2="964.4" y2="254.5" stroke="#454545" stroke-width="1"/>
<rect x="962.64" y="243.5" width="3.5" height="2.5" rx="1.2" fill="#ec4424" stroke="#2a2a2a" stroke-width="0.9"/>
<line x1="969.8" y1="227.2" x2="969.8" y2="253.8" stroke="#454545" stroke-width="1"/>
<rect x="968.09" y="230.9" width="3.5" height="10.0" rx="1.2" fill="#0b9e3e" stroke="#2a2a2a" stroke-width="0.9"/>
<line x1="975.3" y1="241.2" x2="975.3" y2="266.4" stroke="#454545" stroke-width="1"/>
<rect x="973.53" y="242.0" width="3.5" height="18.5" rx="1.2" fill="#ec4424" stroke="#2a2a2a" stroke-width="0.9"/>
<line x1="980.7" y1="244.2" x2="980.7" y2="288.5" stroke="#454545" stroke-width="1"/>
<rect x="978.98" y="250.8" width="3.5" height="34.4" rx="1.2" fill="#ec4424" stroke="#2a2a2a" stroke-width="0.9"/>
<line x1="986.2" y1="278.9" x2="986.2" y2="293.2" stroke="#454545" stroke-width="1"/>
<rect x="984.42" y="284.8" width="3.5" height="4.4" rx="1.2" fill="#ec4424" stroke="#2a2a2a" stroke-width="0.9"/>
<line x1="991.6" y1="279.9" x2="991.6" y2="306.2" stroke="#454545" stroke-width="1"/>
<rect x="989.87" y="282.9" width="3.5" height="18.2" rx="1.2" fill="#ec4424" stroke="#2a2a2a" stroke-width="0.9"/>
<line x1="997.1" y1="297.4" x2="997.1" y2="305.9" stroke="#454545" stroke-width="1"/>
<rect x="995.32" y="298.1" width="3.5" height="7.4" rx="1.2" fill="#ec4424" stroke="#2a2a2a" stroke-width="0.9"/>
<line x1="1002.5" y1="303.3" x2="1002.5" y2="327.7" stroke="#454545" stroke-width="1"/>
<rect x="1000.76" y="308.0" width="3.5" height="14.8" rx="1.2" fill="#ec4424" stroke="#2a2a2a" stroke-width="0.9"/>
<line x1="1008.0" y1="295.2" x2="1008.0" y2="321.8" stroke="#454545" stroke-width="1"/>
<rect x="1006.21" y="305.9" width="3.5" height="8.9" rx="1.2" fill="#0b9e3e" stroke="#2a2a2a" stroke-width="0.9"/>
<line x1="1013.4" y1="281.1" x2="1013.4" y2="298.6" stroke="#454545" stroke-width="1"/>
<rect x="1011.65" y="281.9" width="3.5" height="16.2" rx="1.2" fill="#0b9e3e" stroke="#2a2a2a" stroke-width="0.9"/>
<line x1="1018.8" y1="275.2" x2="1018.8" y2="290.0" stroke="#454545" stroke-width="1"/>
<rect x="1017.10" y="276.0" width="3.5" height="5.2" rx="1.2" fill="#ec4424" stroke="#2a2a2a" stroke-width="0.9"/>
<line x1="1024.3" y1="287.0" x2="1024.3" y2="312.9" stroke="#454545" stroke-width="1"/>
<rect x="1022.55" y="290.7" width="3.5" height="10.8" rx="1.2" fill="#0b9e3e" stroke="#2a2a2a" stroke-width="0.9"/>
<line x1="1029.7" y1="264.9" x2="1029.7" y2="280.4" stroke="#454545" stroke-width="1"/>
<rect x="1027.99" y="270.5" width="3.5" height="5.9" rx="1.2" fill="#0b9e3e" stroke="#2a2a2a" stroke-width="0.9"/>
<line x1="1035.2" y1="261.2" x2="1035.2" y2="274.5" stroke="#454545" stroke-width="1"/>
<rect x="1033.44" y="263.4" width="3.5" height="1.5" rx="1.2" fill="#0b9e3e" stroke="#2a2a2a" stroke-width="0.9"/>
<line x1="1040.6" y1="267.1" x2="1040.6" y2="295.9" stroke="#454545" stroke-width="1"/>
<rect x="1038.88" y="268.6" width="3.5" height="27.0" rx="1.2" fill="#ec4424" stroke="#2a2a2a" stroke-width="0.9"/>
<line x1="1046.1" y1="272.3" x2="1046.1" y2="303.3" stroke="#454545" stroke-width="1"/>
<rect x="1044.33" y="298.9" width="3.5" height="3.7" rx="1.2" fill="#ec4424" stroke="#2a2a2a" stroke-width="0.9"/>
<line x1="1051.5" y1="281.1" x2="1051.5" y2="304.8" stroke="#454545" stroke-width="1"/>
<rect x="1049.78" y="284.8" width="3.5" height="5.5" rx="1.2" fill="#0b9e3e" stroke="#2a2a2a" stroke-width="0.9"/>
<line x1="1057.0" y1="257.2" x2="1057.0" y2="269.3" stroke="#454545" stroke-width="1"/>
<rect x="1055.22" y="259.3" width="3.5" height="1.5" rx="1.2" fill="#0b9e3e" stroke="#2a2a2a" stroke-width="0.9"/>
<line x1="1062.4" y1="238.0" x2="1062.4" y2="253.8" stroke="#454545" stroke-width="1"/>
<rect x="1060.67" y="238.3" width="3.5" height="15.1" rx="1.2" fill="#0b9e3e" stroke="#2a2a2a" stroke-width="0.9"/>
<rect x="996.5" y="222.6" width="76.8" height="122.4" fill="none" stroke="#b03ab0" stroke-width="2.2" rx="1"/>
<path d="M352.6,667.6 Q354.6,670.2 356.6,667.6" fill="none" stroke="#f27a68" stroke-width="1.3" stroke-linecap="round"/>
<path d="M918.3,202.6 Q920.5,199.6 922.7,202.6" fill="none" stroke="#62d08c" stroke-width="1.3" stroke-linecap="round"/>
<path d="M1076.5,237.7 L1082.5,228.7 L1134,228.7 L1134,246.7 L1082.5,246.7 Z" fill="#13ad4f"/><text x="1130.2" y="242.0" text-anchor="end" class="tag">5,180.74</text>
<path d="M1076.5,257.5 L1082.5,248.5 L1134,248.5 L1134,266.5 L1082.5,266.5 Z" fill="#13ad4f"/><text x="1130.2" y="261.8" text-anchor="end" class="tag">5,131.82</text>
<path d="M1076.5,276.8 L1082.5,267.8 L1134,267.8 L1134,285.8 L1082.5,285.8 Z" fill="#2ebfe6"/><text x="1130.2" y="281.1" text-anchor="end" class="tag">5,083.35</text>
</svg>
<div class="a" style="left:11px;top:10px;font-size:17.5px;line-height:20px;font-weight:bold;color:#111;letter-spacing:-0.15px">S&amp;P 500 Index ($SPX)</div>
<div class="a" style="left:11px;top:33px;font-size:14px;line-height:16px;font-weight:bold;color:#151515;letter-spacing:0.25px">5,180.74</div>
<div class="a" style="left:71.5px;top:33px;font-size:14px;line-height:16px;font-weight:bold;color:#157538;letter-spacing:0.25px">+52.95 (+1.03%)</div>
<div class="a" style="left:183px;top:34px;font-size:12px;line-height:16px;color:#707070">05/06/24 [INDEX/CBOE]</div>
<div class="a" style="left:11.5px;top:54px;font-size:11.4px;line-height:14px;font-weight:bold;color:#111">INTERACTIVE CHART</div>
<div class="a" style="left:134px;top:54.5px;font-size:12.5px;line-height:14px;color:#707070">for Mon, May 6th, 2024</div>
<div class="hr" style="left:11px;top:71px;width:1122.5px"></div>
<div class="hr" style="left:11px;top:105.6px;width:1122.5px"></div>
<div class="hr" style="left:11px;top:137.7px;width:1122.5px"></div>

<div class="a t12 lnk" style="left:834px">Notes</div>
<div class="a t12 lnk" style="left:892px">My Charts</div>
<div class="a t12 lnk" style="left:971px">Alerts</div>
<div class="a t12 lnk" style="left:1029.3px">Watch</div>
<div class="a t12 lnk" style="left:1089.5px">Help</div>

<div class="a" style="left:19.4px;top:81px;width:82px;height:20.5px;border:1px solid #9c9c9c;border-top-color:#777"></div>
<div class="a t12" style="left:24px;top:86px;color:#333">$SPX</div>
<div class="a" style="left:101px;top:81px;width:27px;height:20.5px;background:#1a63b6"></div>
<div class="a" style="left:106px;top:85px;font-size:11.2px;line-height:14px;color:#fff;font-weight:bold">GO</div>
<div class="a" style="left:172.5px;top:86px;width:1px;height:16px;background:#e3e3e3"></div>

<div class="btn" style="left:178.6px;width:48.3px"></div><div class="bt" style="left:184px">+Study</div>
<div class="btn" style="left:233px;width:38.7px"></div><div class="bt" style="left:239px">Tools</div>
<div class="btn" style="left:278.2px;width:54.5px"></div><div class="bt" style="left:283.5px">Settings</div>
<div class="btn" style="left:339px;width:60px"></div><div class="bt" style="left:344.5px">Compare</div>
<div class="btn" style="left:404.8px;width:28px"></div><div class="bt" style="left:410.5px">f(x)</div>
<div class="btn" style="left:439.2px;width:71px;top:80.5px"></div><div class="bt" style="left:449px;top:86px">Grid View</div>
<div class="btn" style="left:938px;width:66.5px"></div><div class="bt" style="left:944.5px">Templates</div>
<div class="btn" style="left:1010.4px;width:37.3px"></div><div class="bt" style="left:1016.5px">Print</div>
<div class="btn" style="left:1053.5px;width:45.3px"></div><div class="bt" style="left:1062px">Clear</div>
<div class="btn" style="left:1105.9px;width:25px;top:80.3px;height:21.8px"></div>

<div class="a t12 rng rb" style="left:21.5px">Range:</div>
<div class="a t12 rng" style="left:69px">1D</div>
<div class="a t12 rng" style="left:92.5px">5D</div>
<div class="a t12 rng" style="left:116px">1M</div>
<div class="a t12 rng" style="left:142px">3M</div>
<div class="a t12 rng" style="left:167.5px">6M</div>
<div class="a t12 rng rb" style="left:193px;color:#2a6cbc;letter-spacing:0.5px">9M</div>
<div class="a t12 rng" style="left:220.5px">1Y</div>
<div class="a t12 rng" style="left:243px">2Y</div>
<div class="a t12 rng" style="left:266px">3Y</div>
<div class="a t12 rng" style="left:288px">5Y</div>
<div class="a t12 rng" style="left:310.5px">10Y</div>
<div class="a t12 rng" style="left:339px">20Y</div>
<div class="a t12 rng" style="left:367.5px;letter-spacing:-0.4px">MAX</div>
<div class="a t12 rng rb" style="left:407.5px;letter-spacing:-0.15px">Frequency:</div>
<div class="a t12 rng" style="left:477.5px">Daily</div>
<div class="a" style="left:535px;top:111.4px;width:1px;height:20.5px;background:#e6e6e6"></div>
<div class="a t12 rng" style="left:544.5px">9M</div>
<div class="a t12 rng rb" style="left:599.5px;letter-spacing:0.3px">Date:</div>
<div class="a" style="left:636.3px;top:111px;width:24.3px;height:21.6px;border:1.5px solid #5892d3;border-radius:2.5px"></div>
<div class="a" style="left:1057.3px;top:119px;font-size:12.5px;line-height:14px;font-weight:bold;color:#1d5a94;letter-spacing:0.3px">tutorial</div>
<svg class="a" style="left:0;top:0" width="1170" height="745" viewBox="0 0 1170 745">
<path d="M41.6,163.6 L45,166.9 L41.6,170.2" fill="none" stroke="#111" stroke-width="2" stroke-linecap="round" stroke-linejoin="round"/>
<path d="M41.6,191.2 L45,194.5 L41.6,197.8" fill="none" stroke="#111" stroke-width="2" stroke-linecap="round" stroke-linejoin="round"/>
<path d="M41.6,218.0 L45,221.3 L41.6,224.6" fill="none" stroke="#111" stroke-width="2" stroke-linecap="round" stroke-linejoin="round"/>
<path d="M41.6,245.4 L45,248.7 L41.6,252.0" fill="none" stroke="#111" stroke-width="2" stroke-linecap="round" stroke-linejoin="round"/>
<path d="M41.6,272.5 L45,275.8 L41.6,279.1" fill="none" stroke="#111" stroke-width="2" stroke-linecap="round" stroke-linejoin="round"/>
<path d="M41.6,299.8 L45,303.1 L41.6,306.4" fill="none" stroke="#111" stroke-width="2" stroke-linecap="round" stroke-linejoin="round"/>
<g fill="none" stroke="#111" stroke-width="1.3"><circle cx="19" cy="172.4" r="2.7"/><circle cx="26.3" cy="164.9" r="2.7"/><line x1="20.9" y1="170.4" x2="24.4" y2="166.8"/><line x1="28.2" y1="163" x2="33.8" y2="157.4"/></g>
<g fill="none" stroke="#111" stroke-width="1.2"><circle cx="21.3" cy="187.8" r="2"/><circle cx="18.5" cy="198.7" r="2"/><line x1="20.8" y1="189.8" x2="19" y2="196.7"/></g>
<g stroke="#555" stroke-width="1.5"><line x1="24.5" y1="187.8" x2="34.2" y2="187.8"/><line x1="24.5" y1="191.6" x2="34.2" y2="191.6"/><line x1="24.5" y1="195.3" x2="34.2" y2="195.3"/><line x1="24.5" y1="199" x2="34.2" y2="199"/></g>
<g fill="none" stroke="#111" stroke-width="1.1"><path d="M25.1,214.7 C28.5,216 31,218 32.1,220.7 C31,223.5 28.5,225.5 25.1,226.7 C21.5,225.5 19,223.3 18.1,220.5 C19,218 21.5,216 25.1,214.7 Z"/></g>
<g fill="#fff" stroke="#111" stroke-width="1.1"><circle cx="25.1" cy="214.7" r="1.8"/><circle cx="18.1" cy="220.5" r="1.8"/><circle cx="32.1" cy="220.7" r="1.8"/><circle cx="25.1" cy="226.7" r="1.8"/></g>
<path d="M25.1,239.4 L30,244.7 L27.3,244.7 L27.3,251.2 L30,251.2 L25.1,256.4 L20.2,251.2 L22.9,251.2 L22.9,244.7 L20.2,244.7 Z" fill="#fff" stroke="#111" stroke-width="1.2" stroke-linejoin="miter"/>
<circle cx="25.1" cy="275.4" r="7.9" fill="none" stroke="#111" stroke-width="1.1"/>
<path d="M22.4,271.6 L22.4,279.3 L26.5,279.3 C29.1,279.3 29.1,275.3 26.5,275.3 L22.4,275.3 M22.4,271.6 L26.2,271.6 C28.5,271.6 28.5,275.3 26.2,275.3" fill="none" stroke="#111" stroke-width="1.5" stroke-linejoin="round"/>
<g stroke="#555" stroke-width="1.4"><line x1="19.3" y1="297.7" x2="29" y2="297.7"/><line x1="19.3" y1="302.3" x2="31.3" y2="302.3"/><line x1="21.2" y1="306.9" x2="31.3" y2="306.9"/></g>
<g fill="#fff" stroke="#333" stroke-width="1"><circle cx="30.6" cy="297.7" r="1.6"/><circle cx="19.6" cy="306.9" r="1.6"/></g>
<path d="M17.8,338.3 L17.8,328.5 A7.4,7.4 0 0 1 32.7,328.5 L32.7,338.3 L28.4,338.3 L28.4,328.5 A3.15,3.15 0 0 0 22.1,328.5 L22.1,338.3 Z" fill="none" stroke="#111" stroke-width="1.3" stroke-linejoin="round"/>
<g stroke="#111" stroke-width="1.1"><line x1="17.8" y1="334.4" x2="22.1" y2="334.4"/><line x1="28.4" y1="334.4" x2="32.7" y2="334.4"/></g>
<rect x="18.5" y="356.5" width="13.4" height="7.6" fill="none" stroke="#111" stroke-width="1.5"/>
<path d="M21.4,356.3 L21.4,352.5 A3.7,3.7 0 0 1 29,351.8" fill="none" stroke="#111" stroke-width="1.4"/>
<path d="M19.8,379.5 A7.1,7.1 0 1 1 18.5,387.5" fill="none" stroke="#9a9a9a" stroke-width="1.4"/>
<path d="M17,377.5 L17,382.6 L22,382.6" fill="none" stroke="#9a9a9a" stroke-width="1.4"/>
<path d="M30.4,406.5 A7.1,7.1 0 1 0 31.7,414.5" fill="none" stroke="#9a9a9a" stroke-width="1.4"/>
<path d="M33.4,404.6 L33.4,409.7 L28.3,409.7" fill="none" stroke="#9a9a9a" stroke-width="1.4"/>
<g fill="none" stroke="#111" stroke-width="1.4"><rect x="135.6" y="86.2" width="3.8" height="6.2"/><line x1="137.5" y1="83.9" x2="137.5" y2="86.2"/><line x1="137.5" y1="92.4" x2="137.5" y2="94.7"/><rect x="142.6" y="89.4" width="3.8" height="6"/><line x1="144.5" y1="86.9" x2="144.5" y2="89.4"/><line x1="144.5" y1="95.4" x2="144.5" y2="97.6"/></g>
<path d="M151.3,89.6 L155,93 L158.7,89.6" fill="none" stroke="#111" stroke-width="2" stroke-linecap="round" stroke-linejoin="round"/>
<path d="M514.9,119.9 L518.8,123.2 L522.7,119.9" fill="none" stroke="#111" stroke-width="2" stroke-linecap="round" stroke-linejoin="round"/>
<path d="M572.6,119.9 L576.5,123.2 L580.4,119.9" fill="none" stroke="#111" stroke-width="2" stroke-linecap="round" stroke-linejoin="round"/>
<rect x="642.3" y="117.2" width="13" height="12.6" rx="1.3" fill="#2a67b7"/>
<g stroke="#fff" stroke-width="0.9"><line x1="643.3" y1="121.3" x2="654.3" y2="121.3"/><line x1="643.3" y1="124.1" x2="654.3" y2="124.1"/><line x1="643.3" y1="126.9" x2="654.3" y2="126.9"/><line x1="645.5" y1="121.3" x2="645.5" y2="129"/><line x1="648.8" y1="121.3" x2="648.8" y2="129"/><line x1="652.1" y1="121.3" x2="652.1" y2="129"/></g>
<g fill="#2a67b7" stroke="#fff" stroke-width="0.8"><rect x="644.5" y="115.3" width="2.2" height="3.6" rx="1"/><rect x="650.8" y="115.3" width="2.2" height="3.6" rx="1"/></g>
<g stroke="#1f5fb5" fill="#1f5fb5"><line x1="1114.8" y1="95.2" x2="1120.2" y2="89.8" stroke-width="1.9" stroke-linecap="round"/><rect x="1118.8" y="88" width="3.2" height="3.3" stroke="none"/></g>
<rect x="1042.1" y="119.5" width="12.5" height="10.8" rx="1.6" fill="none" stroke="#2f6aa3" stroke-width="1.3"/>
<g fill="#2f6aa3"><rect x="1042" y="119.5" width="3.2" height="10.8"/><rect x="1051.4" y="119.5" width="3.2" height="10.8"/><rect x="1045" y="124.2" width="6.5" height="1.4" opacity="0.8"/></g>
<g fill="#fff" opacity="0.85"><rect x="1043" y="121.2" width="1.2" height="1.1"/><rect x="1052.4" y="121.2" width="1.2" height="1.1"/><rect x="1043" y="123.8" width="1.2" height="1.1"/><rect x="1052.4" y="123.8" width="1.2" height="1.1"/><rect x="1043" y="126.4" width="1.2" height="1.1"/><rect x="1052.4" y="126.4" width="1.2" height="1.1"/><rect x="1043" y="128.5" width="1.2" height="1.1"/><rect x="1052.4" y="128.5" width="1.2" height="1.1"/></g>
<g stroke="#000" stroke-width="1.8" stroke-linecap="round"><line x1="1111.6" y1="118" x2="1123.2" y2="118"/><line x1="1111.6" y1="122.2" x2="1123.2" y2="122.2"/><line x1="1111.6" y1="126.6" x2="1123.2" y2="126.6"/></g>
<path d="M877.5,56.6 L871,56.6 Q869.9,56.6 869.9,57.7 L869.9,67.3 Q869.9,68.3 871,68.3 L880.6,68.3 Q881.7,68.3 881.7,67.3 L881.7,61.5" fill="none" stroke="#5585b8" stroke-width="1.4"/>
<path d="M874.5,64.3 L875,61.3 L880.8,55.3 L883,57.5 L877.2,63.5 Z" fill="none" stroke="#5585b8" stroke-width="1.3" stroke-linejoin="round"/>
<circle cx="955.6" cy="61.7" r="6.7" fill="#0e4886"/>
<g stroke="#fff" stroke-width="2.3"><line x1="951.7" y1="61.7" x2="959.5" y2="61.7"/><line x1="955.6" y1="57.8" x2="955.6" y2="65.6"/></g>
<circle cx="1012.1" cy="62" r="7.5" fill="#f6a623"/>
<rect x="1011" y="57" width="2.3" height="6.5" rx="0.8" fill="#fff"/><circle cx="1012.15" cy="66" r="1.25" fill="#fff"/>
<polygon points="1072.50,53.60 1074.44,58.53 1079.73,58.85 1075.64,62.22 1076.97,67.35 1072.50,64.50 1068.03,67.35 1069.36,62.22 1065.27,58.85 1070.56,58.53" fill="#1a5fb4"/>
<circle cx="1123.9" cy="61.6" r="6.6" fill="none" stroke="#1f5c99" stroke-width="1.6"/>
<text x="1123.9" y="65.7" text-anchor="middle" style="font-family:'Liberation Sans';font-size:11.5px;font-weight:bold;fill:#1f5c99">?</text>
</svg>
<div class="a" style="left:0;top:0;width:1170px;height:745px;border-top:1px solid #000;border-left:1px solid #000"></div>
<div class="a" style="left:1px;top:1px;width:1169px;height:744px;border:4px solid #083561;border-right-width:5px;border-bottom-width:5px"></div>
</body></html>
